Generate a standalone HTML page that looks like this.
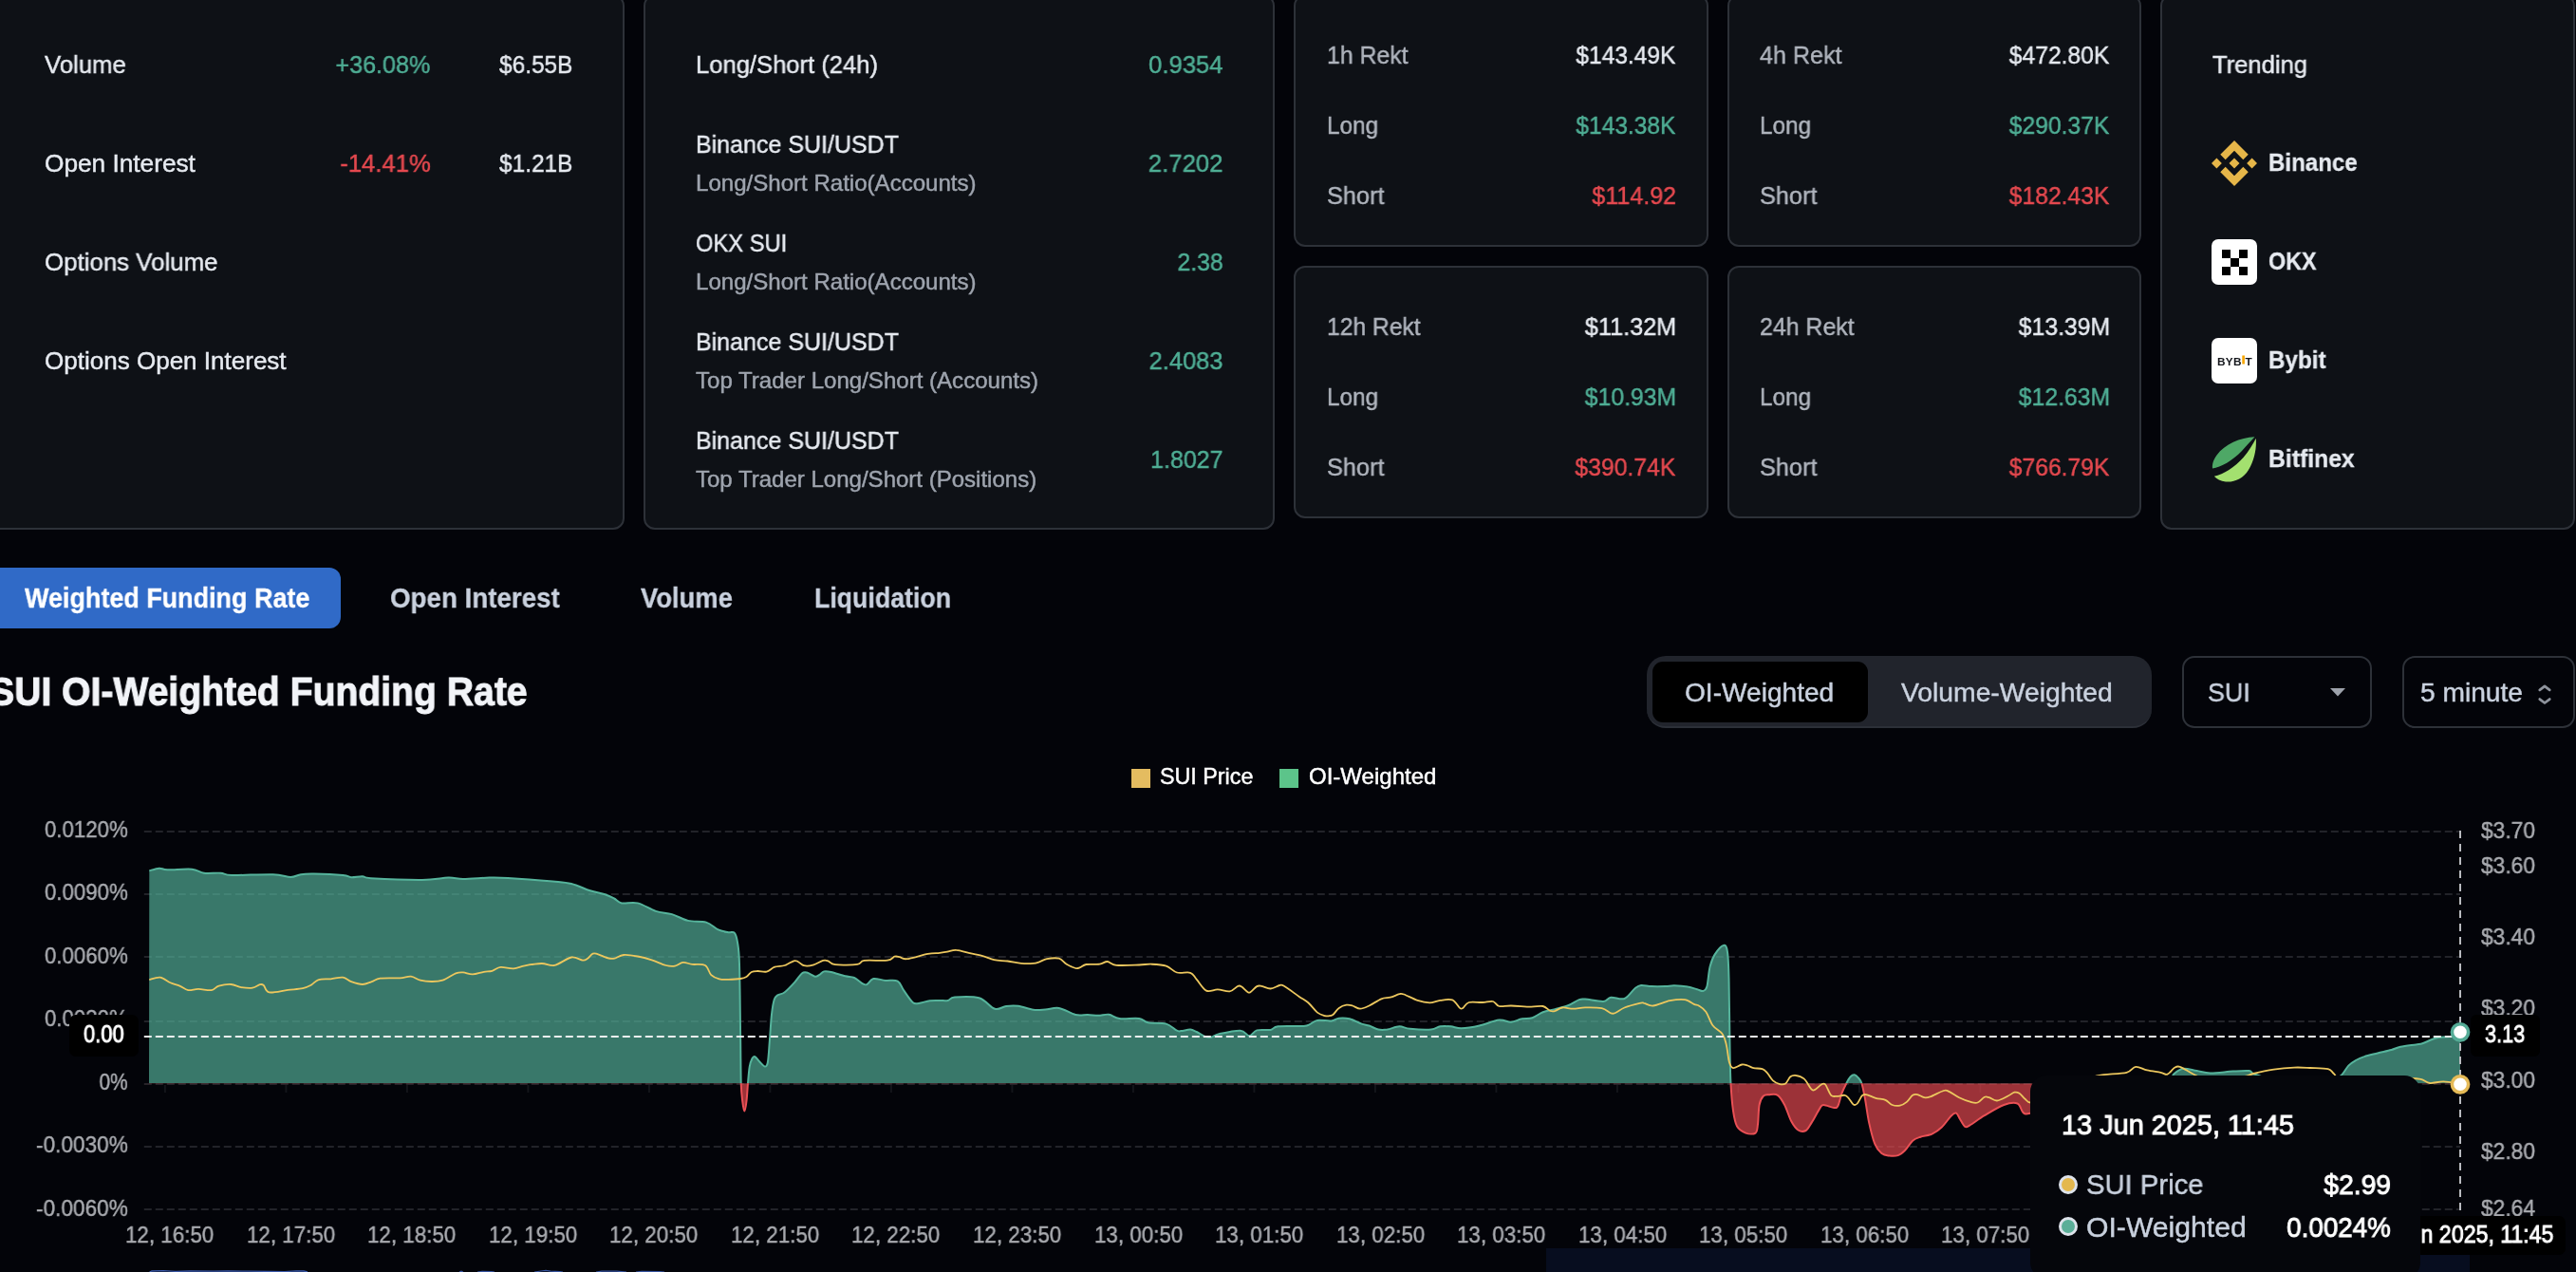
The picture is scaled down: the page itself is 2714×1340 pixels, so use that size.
<!DOCTYPE html><html lang="en"><head><meta charset="utf-8"><title>SUI Derivatives</title><style>
html,body{margin:0;padding:0;background:#030409;}
html{width:2714px;height:1340px;overflow:hidden;}
body{width:2714px;height:1340px;position:relative;overflow:hidden;font-family:"Liberation Sans",sans-serif;}
.abs{position:absolute;}
.t{position:absolute;white-space:nowrap;line-height:1;will-change:transform;-webkit-text-stroke:0.45px;}
.card{position:absolute;box-sizing:border-box;background:#0e1116;border:2px solid #2d3138;border-radius:12px;}
</style></head><body><div id="page" style="position:absolute;left:0;top:0;width:2714px;height:1340px;overflow:hidden">
<div class="card" style="left:-20px;top:-6px;width:678px;height:564px"></div>
<div class="card" style="left:678px;top:-6px;width:665px;height:564px"></div>
<div class="card" style="left:1363px;top:-6px;width:437px;height:266px"></div>
<div class="card" style="left:1820px;top:-6px;width:436px;height:266px"></div>
<div class="card" style="left:1363px;top:280px;width:437px;height:266px"></div>
<div class="card" style="left:1820px;top:280px;width:436px;height:266px"></div>
<div class="card" style="left:2276px;top:-6px;width:437px;height:564px"></div>
<div class="abs" style="left:-20px;top:598px;width:379px;height:64px;background:#306ac7;border-radius:12px"></div>
<div class="abs" style="left:1735px;top:691px;width:532px;height:76px;background:#21242c;border-radius:20px;box-sizing:border-box;border-bottom:2px solid #2c3038"></div>
<div class="abs" style="left:1741px;top:697px;width:227px;height:64px;background:#000;border-radius:11px"></div>
<div class="abs" style="left:2299px;top:691px;width:200px;height:76px;box-sizing:border-box;border:2px solid #2d3138;border-radius:13px"></div>
<div class="abs" style="left:2531px;top:691px;width:182px;height:76px;box-sizing:border-box;border:2px solid #2d3138;border-radius:13px"></div>
<svg class="abs" style="left:2455px;top:725px" width="16" height="9" viewBox="0 0 16 9"><path d="M0,0H16L8,8.6Z" fill="#9da2ab"/></svg>
<svg class="abs" style="left:2672px;top:719px" width="18" height="25" viewBox="0 0 18 25"><path d="M3.8,7.8L9,3.9L14.2,7.8M3.8,17.6L9,21.5L14.2,17.6" fill="none" stroke="#8e939c" stroke-width="2.8" stroke-linecap="round" stroke-linejoin="round"/></svg>
<div class="abs" style="left:1192px;top:810px;width:20px;height:20px;background:#e4bc60"></div>
<div class="abs" style="left:1348px;top:810px;width:20px;height:20px;background:#5cc48a"></div>
<svg class="abs" style="left:2330px;top:148px" width="48" height="48" viewBox="0 0 126.61 126.61"><g fill="#e6b649"><path d="M38.73 53.2l24.59-24.58 24.6 24.6 14.3-14.31L63.32 0 24.42 38.9zM0 63.31l14.3-14.31 14.31 14.31-14.31 14.3zM38.73 73.41l24.59 24.59 24.6-24.6 14.31 14.29-38.9 38.91-38.91-38.88zM98 63.31l14.3-14.31 14.31 14.3-14.31 14.32z"/><path d="M77.83 63.3L63.32 48.78 52.59 59.51l-1.24 1.23-2.54 2.54 14.51 14.5 14.51-14.47z"/></g></svg>
<div class="abs" style="left:2330px;top:252px;width:48px;height:48px;background:#fff;border-radius:7px"></div>
<div class="abs" style="left:2340.5px;top:262.5px;width:9px;height:9px;background:#000"></div>
<div class="abs" style="left:2358.5px;top:262.5px;width:9px;height:9px;background:#000"></div>
<div class="abs" style="left:2349.5px;top:271.5px;width:9px;height:9px;background:#000"></div>
<div class="abs" style="left:2340.5px;top:280.5px;width:9px;height:9px;background:#000"></div>
<div class="abs" style="left:2358.5px;top:280.5px;width:9px;height:9px;background:#000"></div>
<div class="abs" style="left:2330px;top:356px;width:48px;height:48px;background:#fff;border-radius:7px"></div>
<div class="t" id="bybit" style="left:2336px;top:376.2px;font-size:11.8px;font-weight:700;color:#15171c;letter-spacing:0.35px;-webkit-text-stroke:0;transform-origin:0 0">BYB<span style="color:#f7a600;-webkit-text-stroke:0.8px #f7a600;position:relative;top:-2.4px">I</span>T</div>
<svg class="abs" style="left:2330px;top:460px" width="48" height="48" viewBox="0 0 48 48"><path d="M45.5,0.3 C30,1 14,8 5.5,19.5 C1.5,25 0.6,29.5 1,33.5 C10,32 22,25.5 32,15 C38,8.5 42.5,3.5 45.5,0.3Z" fill="#4ea866"/><path d="M46.8,1.8 C47.5,12 45.5,24 39,35 C33.5,44 24,48.3 15,47.5 C9.5,47 5.5,44.5 2.8,41.7 C13,39.5 24,32.5 33.5,22 C39.5,15 44,7.5 46.8,1.8Z" fill="#a3e06f"/></svg>
<svg class="abs" width="2714" height="1340" viewBox="0 0 2714 1340" style="left:0;top:0">
<defs><clipPath id="cpos"><rect x="0" y="800" width="2714" height="341.20000000000005"/></clipPath><clipPath id="cneg"><rect x="0" y="1141.2" width="2714" height="300"/></clipPath></defs>
<rect x="1629" y="1315" width="973" height="30" fill="#070d1f"/>
<path d="M157.5,1340 L160,1339 L172,1338.7 L185,1339.3 L200,1339 L225,1339.2 L240,1338.8 L262,1339.2 L285,1339.4 L300,1339.6 L312,1338.8 L320,1339 L324,1340" fill="none" stroke="#4469c8" stroke-width="1.3" stroke-opacity="0.85"/>
<path d="M484,1340 L486,1339.2 L488,1340 M503,1340 L508,1339.3 L518,1339.5 L521,1340 M563,1340 L570,1339 L575,1338.4 L580,1339.2 L590,1339.6 L593,1340 M628,1340 L634,1339.2 L650,1339.2 L660,1340 M670,1340 L676,1339.4 L695,1339.5 L700,1340" fill="none" stroke="#4469c8" stroke-width="1.2" stroke-opacity="0.8"/>
<line x1="151.8" x2="2592" y1="876.0" y2="876.0" stroke="#222329" stroke-width="2" stroke-dasharray="8 4"/>
<line x1="151.8" x2="2592" y1="942.0" y2="942.0" stroke="#222329" stroke-width="2" stroke-dasharray="8 4"/>
<line x1="151.8" x2="2592" y1="1008.0" y2="1008.0" stroke="#222329" stroke-width="2" stroke-dasharray="8 4"/>
<line x1="151.8" x2="2592" y1="1076.0" y2="1076.0" stroke="#222329" stroke-width="2" stroke-dasharray="8 4"/>
<line x1="151.8" x2="2592" y1="1208.0" y2="1208.0" stroke="#222329" stroke-width="2" stroke-dasharray="8 4"/>
<line x1="151.8" x2="2592" y1="1274.0" y2="1274.0" stroke="#222329" stroke-width="2" stroke-dasharray="8 4"/>
<line x1="151.8" x2="2592" y1="1142" y2="1142" stroke="#272228" stroke-width="2" stroke-dasharray="8 4"/>
<line x1="173.9" x2="173.9" y1="1143" y2="1151" stroke="#13151a" stroke-width="2"/>
<line x1="301.4" x2="301.4" y1="1143" y2="1151" stroke="#13151a" stroke-width="2"/>
<line x1="428.9" x2="428.9" y1="1143" y2="1151" stroke="#13151a" stroke-width="2"/>
<line x1="556.4" x2="556.4" y1="1143" y2="1151" stroke="#13151a" stroke-width="2"/>
<line x1="683.9" x2="683.9" y1="1143" y2="1151" stroke="#13151a" stroke-width="2"/>
<line x1="811.4" x2="811.4" y1="1143" y2="1151" stroke="#13151a" stroke-width="2"/>
<line x1="938.9" x2="938.9" y1="1143" y2="1151" stroke="#13151a" stroke-width="2"/>
<line x1="1066.4" x2="1066.4" y1="1143" y2="1151" stroke="#13151a" stroke-width="2"/>
<line x1="1193.9" x2="1193.9" y1="1143" y2="1151" stroke="#13151a" stroke-width="2"/>
<line x1="1321.4" x2="1321.4" y1="1143" y2="1151" stroke="#13151a" stroke-width="2"/>
<line x1="1448.9" x2="1448.9" y1="1143" y2="1151" stroke="#13151a" stroke-width="2"/>
<line x1="1576.4" x2="1576.4" y1="1143" y2="1151" stroke="#13151a" stroke-width="2"/>
<line x1="1703.9" x2="1703.9" y1="1143" y2="1151" stroke="#13151a" stroke-width="2"/>
<line x1="1831.4" x2="1831.4" y1="1143" y2="1151" stroke="#13151a" stroke-width="2"/>
<line x1="1958.9" x2="1958.9" y1="1143" y2="1151" stroke="#13151a" stroke-width="2"/>
<line x1="2086.4" x2="2086.4" y1="1143" y2="1151" stroke="#13151a" stroke-width="2"/>
<line x1="2213.9" x2="2213.9" y1="1143" y2="1151" stroke="#13151a" stroke-width="2"/>
<line x1="2341.4" x2="2341.4" y1="1143" y2="1151" stroke="#13151a" stroke-width="2"/>
<line x1="2468.9" x2="2468.9" y1="1143" y2="1151" stroke="#13151a" stroke-width="2"/>
<g clip-path="url(#cpos)"><path d="M157.3,917.3C159.0,916.9 164.5,914.9 167.7,914.7C170.9,914.5 170.8,916.1 176.5,916.3C182.2,916.5 195.7,915.1 202.1,915.7C208.5,916.3 209.8,919.0 214.9,919.7C220.0,920.4 227.6,919.3 232.5,919.7C237.4,920.1 235.1,921.8 244.3,922.0C253.5,922.2 277.3,920.9 287.6,921.2C297.9,921.5 301.3,924.0 306.2,924.0C311.1,924.0 312.9,921.8 317.0,921.2C321.1,920.6 323.4,920.5 330.8,920.6C338.2,920.7 354.8,921.4 361.3,922.0C367.9,922.6 366.7,924.0 370.1,924.2C373.5,924.4 378.4,923.0 381.9,923.2C385.3,923.4 381.9,924.6 390.8,925.2C401.3,925.8 431.2,927.0 444.8,926.9C458.4,926.8 465.1,924.8 472.3,924.6C479.5,924.4 480.8,925.9 488.0,925.9C495.2,925.9 507.7,924.8 515.6,924.6C523.5,924.5 524.1,924.4 535.2,925.0C546.3,925.6 571.3,927.5 582.4,928.5C593.5,929.5 595.5,929.4 602.0,931.0C608.5,932.6 615.8,936.4 621.7,938.3C627.6,940.2 633.2,940.9 637.4,942.3C641.6,943.7 644.1,945.0 647.0,946.5C649.9,948.0 650.8,950.6 654.9,951.4C659.0,952.2 665.8,950.0 671.8,951.4C677.8,952.8 684.9,957.9 690.9,959.9C696.9,961.9 702.2,961.4 707.9,963.1C713.6,964.8 718.9,968.5 724.9,969.9C730.9,971.3 738.7,970.0 744.0,971.6C749.3,973.2 752.8,977.6 756.7,979.4C760.6,981.2 764.6,981.7 767.4,982.2C770.2,982.7 772.1,980.9 773.7,982.6C775.3,984.3 776.0,986.7 776.9,992.2C777.8,997.7 778.5,999.2 779.0,1015.5C779.5,1031.8 779.8,1068.9 780.1,1089.8C780.4,1110.7 780.4,1129.1 780.7,1140.8C781.1,1152.5 781.6,1155.0 782.2,1159.9C782.8,1164.9 783.6,1170.5 784.3,1170.5C785.0,1170.5 785.9,1164.9 786.5,1159.9C787.1,1155.0 787.5,1146.8 788.0,1140.8C788.5,1134.8 789.0,1128.0 789.7,1123.8C790.4,1119.5 791.5,1117.1 792.4,1115.3C793.3,1113.5 794.1,1112.7 795.4,1113.2C796.7,1113.7 798.6,1116.8 800.3,1118.5C802.0,1120.2 804.2,1123.2 805.6,1123.4C807.0,1123.6 807.9,1124.0 808.8,1119.5C809.7,1115.0 810.2,1104.7 810.9,1096.2C811.6,1087.7 812.2,1075.8 813.0,1068.6C813.8,1061.3 814.7,1056.1 815.8,1052.7C816.9,1049.3 817.6,1049.7 819.4,1048.4C821.2,1047.2 823.8,1047.5 826.8,1045.2C829.8,1042.9 834.4,1037.9 837.4,1034.6C840.4,1031.3 842.7,1027.2 844.8,1025.5C846.9,1023.8 847.8,1024.1 850.1,1024.6C852.4,1025.1 856.5,1028.3 858.6,1028.7C860.7,1029.1 861.3,1028.1 862.9,1027.2C864.5,1026.3 866.1,1023.9 868.2,1023.4C870.3,1022.9 871.9,1023.2 875.6,1024.0C879.3,1024.8 886.4,1027.3 890.5,1028.3C894.6,1029.3 896.8,1028.6 900.0,1030.0C903.2,1031.4 907.3,1035.6 909.6,1036.7C911.9,1037.8 912.0,1037.7 913.8,1036.7C915.6,1035.8 917.0,1031.6 920.2,1031.0C923.4,1030.4 928.6,1032.5 932.9,1032.9C937.1,1033.3 942.5,1031.9 945.7,1033.6C948.9,1035.3 949.4,1039.4 952.0,1043.1C954.6,1046.8 958.9,1053.6 961.6,1055.9C964.3,1058.2 965.0,1057.2 968.0,1056.9C971.0,1056.6 975.9,1054.7 979.6,1054.2C983.3,1053.7 986.8,1054.0 990.0,1053.9C993.2,1053.9 996.1,1054.5 998.8,1053.9C1001.4,1053.3 1000.5,1050.9 1005.9,1050.4C1011.3,1050.0 1024.4,1049.2 1031.4,1051.2C1038.4,1053.2 1043.3,1061.2 1048.1,1062.7C1052.9,1064.2 1055.9,1060.5 1060.0,1060.0C1064.1,1059.5 1068.0,1059.2 1072.8,1059.8C1077.6,1060.4 1083.9,1063.2 1088.7,1063.8C1093.5,1064.4 1096.9,1063.8 1101.4,1063.5C1105.9,1063.2 1110.4,1061.0 1115.7,1061.9C1121.0,1062.8 1128.2,1067.8 1133.2,1069.0C1138.2,1070.2 1142.0,1068.9 1146.0,1069.0C1150.0,1069.1 1153.4,1069.8 1157.1,1069.8C1160.8,1069.8 1164.6,1068.2 1168.3,1068.7C1172.0,1069.2 1174.1,1072.3 1179.4,1073.0C1184.7,1073.7 1195.1,1072.3 1200.1,1073.0C1205.1,1073.7 1204.8,1076.4 1209.6,1077.3C1214.4,1078.2 1223.7,1077.2 1228.7,1078.6C1233.8,1080.0 1237.2,1084.5 1239.9,1085.7C1242.6,1087.0 1242.3,1086.3 1244.7,1086.1C1247.1,1085.9 1251.6,1084.4 1254.2,1084.6C1256.8,1084.8 1257.9,1085.8 1260.6,1087.0C1263.2,1088.2 1267.4,1091.2 1270.1,1092.1C1272.8,1093.0 1274.1,1092.9 1276.5,1092.4C1278.9,1091.9 1279.4,1090.3 1284.4,1089.2C1289.4,1088.1 1301.4,1085.4 1306.7,1085.7C1312.0,1086.0 1313.4,1091.3 1316.3,1091.3C1319.2,1091.2 1320.5,1086.5 1324.2,1085.4C1327.9,1084.3 1334.9,1085.6 1338.6,1084.9C1342.3,1084.2 1340.7,1082.0 1346.5,1081.3C1352.3,1080.6 1368.0,1081.4 1373.6,1081.0C1379.2,1080.6 1377.5,1080.1 1379.9,1079.1C1382.3,1078.1 1384.1,1075.5 1387.9,1074.9C1391.7,1074.3 1398.9,1075.8 1402.7,1075.4C1406.5,1075.0 1407.5,1073.1 1410.7,1072.7C1413.9,1072.3 1417.8,1072.3 1421.8,1073.3C1425.8,1074.3 1431.1,1077.4 1434.6,1078.6C1438.0,1079.8 1439.6,1079.5 1442.5,1080.5C1445.4,1081.5 1448.9,1083.9 1452.1,1084.6C1455.3,1085.3 1457.9,1085.1 1461.6,1084.6C1465.3,1084.0 1470.4,1081.4 1474.4,1081.3C1478.4,1081.2 1479.9,1083.3 1485.5,1083.8C1491.1,1084.3 1502.5,1084.9 1507.8,1084.5C1513.1,1084.1 1513.8,1081.8 1517.3,1081.3C1520.8,1080.8 1524.8,1081.0 1528.5,1081.3C1532.2,1081.6 1534.6,1083.4 1539.6,1083.3C1544.6,1083.2 1552.1,1082.0 1558.7,1080.5C1565.3,1079.0 1573.8,1075.2 1579.4,1074.6C1585.0,1074.0 1588.1,1076.9 1592.1,1076.7C1596.1,1076.5 1599.6,1074.0 1603.3,1073.3C1607.0,1072.5 1610.7,1073.4 1614.4,1072.2C1618.1,1071.0 1621.6,1067.8 1625.6,1066.3C1629.6,1064.8 1633.8,1064.3 1638.3,1063.1C1642.8,1061.9 1648.3,1060.7 1652.6,1059.0C1656.8,1057.3 1660.9,1054.2 1663.8,1053.1C1666.7,1052.0 1665.9,1052.3 1670.1,1052.6C1674.3,1052.9 1684.7,1055.3 1689.2,1055.0C1693.7,1054.7 1693.5,1051.2 1697.2,1050.7C1700.9,1050.2 1707.3,1053.6 1711.5,1052.0C1715.7,1050.4 1719.7,1043.5 1722.6,1041.2C1725.5,1038.9 1726.1,1038.3 1729.0,1038.0C1731.9,1037.7 1735.8,1038.9 1740.1,1039.1C1744.3,1039.3 1750.5,1039.2 1754.5,1039.1C1758.5,1039.0 1760.0,1038.2 1764.0,1038.3C1768.0,1038.4 1774.3,1038.9 1778.3,1039.6C1782.3,1040.2 1785.3,1041.5 1788.0,1042.2C1790.7,1042.9 1792.6,1044.5 1794.3,1044.0C1796.0,1043.5 1797.2,1043.5 1798.4,1039.3C1799.6,1035.1 1800.1,1024.4 1801.5,1018.8C1802.9,1013.2 1804.2,1009.4 1806.6,1005.6C1809.0,1001.8 1813.6,996.4 1815.8,995.9C1818.0,995.4 1819.0,996.6 1819.9,1002.5C1820.9,1008.4 1821.1,1014.4 1821.5,1031.1C1821.9,1047.8 1822.2,1084.2 1822.5,1102.6C1822.8,1121.0 1822.9,1130.2 1823.5,1141.5C1824.1,1152.8 1824.9,1162.6 1826.0,1170.1C1827.1,1177.6 1827.9,1182.6 1830.1,1186.5C1832.3,1190.4 1836.1,1192.4 1839.3,1193.6C1842.5,1194.8 1847.4,1195.1 1849.5,1193.6C1851.6,1192.1 1851.3,1189.3 1852.0,1184.4C1852.7,1179.5 1852.6,1168.9 1853.6,1164.0C1854.5,1159.1 1856.0,1156.6 1857.7,1154.8C1859.4,1153.0 1861.2,1153.5 1863.8,1153.3C1866.3,1153.1 1870.3,1152.0 1873.0,1153.8C1875.7,1155.6 1877.8,1159.4 1880.2,1164.0C1882.6,1168.6 1884.9,1176.9 1887.3,1181.3C1889.7,1185.7 1892.0,1188.9 1894.5,1190.5C1897.0,1192.1 1900.2,1192.3 1902.6,1191.0C1905.0,1189.7 1906.4,1186.2 1908.8,1182.4C1911.2,1178.6 1915.0,1171.2 1917.0,1168.1C1919.0,1165.0 1918.5,1164.2 1921.0,1164.0C1923.5,1163.8 1929.7,1166.8 1932.3,1167.0C1934.9,1167.2 1935.0,1167.5 1936.4,1165.0C1937.8,1162.5 1939.0,1155.6 1940.5,1151.7C1942.0,1147.8 1943.7,1144.4 1945.2,1141.5C1946.7,1138.6 1948.3,1135.8 1949.7,1134.3C1951.1,1132.8 1952.5,1132.1 1953.8,1132.3C1955.1,1132.5 1956.5,1133.9 1957.8,1135.4C1959.1,1136.9 1960.3,1137.8 1961.5,1141.5C1962.7,1145.2 1963.7,1151.0 1965.0,1157.8C1966.3,1164.6 1967.4,1174.6 1969.1,1182.4C1970.8,1190.2 1973.0,1199.5 1975.2,1204.9C1977.4,1210.4 1979.9,1213.0 1982.4,1215.1C1985.0,1217.2 1987.6,1217.2 1990.5,1217.5C1993.4,1217.8 1997.0,1218.0 1999.7,1217.1C2002.4,1216.2 2004.3,1214.5 2006.9,1212.0C2009.5,1209.5 2012.4,1204.2 2015.1,1201.8C2017.8,1199.4 2019.9,1198.9 2023.3,1197.7C2026.7,1196.5 2031.8,1196.3 2035.5,1194.6C2039.2,1192.9 2042.3,1190.7 2045.7,1187.5C2049.1,1184.3 2053.4,1177.7 2056.0,1175.2C2058.6,1172.7 2059.6,1171.9 2061.1,1172.6C2062.6,1173.3 2063.7,1176.9 2065.2,1179.3C2066.7,1181.7 2068.6,1185.9 2070.3,1186.9C2072.0,1187.9 2072.0,1187.4 2075.4,1185.4C2078.8,1183.5 2084.7,1178.8 2090.7,1175.2C2096.7,1171.6 2105.4,1166.1 2111.2,1164.0C2117.0,1161.9 2122.1,1161.2 2125.5,1162.5C2128.9,1163.8 2129.3,1170.4 2131.6,1172.1C2133.8,1173.8 2134.3,1174.0 2139.0,1172.8C2143.7,1171.6 2149.8,1167.5 2160.0,1165.0C2170.2,1162.5 2185.0,1160.5 2200.0,1158.0C2215.0,1155.5 2236.3,1152.8 2250.0,1150.0C2263.7,1147.2 2275.2,1144.7 2282.0,1141.5C2288.8,1138.3 2287.7,1133.6 2290.7,1131.0C2293.7,1128.4 2296.2,1126.2 2300.2,1125.7C2304.2,1125.2 2309.7,1127.3 2314.5,1128.1C2319.3,1128.9 2322.4,1130.4 2328.8,1130.5C2335.2,1130.6 2345.9,1129.0 2352.7,1128.6C2359.5,1128.2 2365.8,1127.7 2369.4,1128.1C2373.0,1128.5 2370.7,1129.8 2374.1,1131.0C2377.5,1132.2 2380.7,1134.6 2390.0,1135.5C2399.3,1136.4 2418.7,1136.4 2430.0,1136.5C2441.3,1136.6 2451.9,1136.6 2458.0,1136.0C2464.1,1135.4 2463.7,1135.3 2466.4,1133.1C2469.1,1130.9 2471.7,1125.3 2474.3,1122.6C2476.9,1119.9 2479.2,1118.6 2482.0,1117.0C2484.8,1115.4 2487.1,1114.3 2490.9,1113.1C2494.7,1111.8 2500.2,1110.7 2505.0,1109.5C2509.8,1108.3 2515.5,1107.1 2519.5,1106.0C2523.5,1104.9 2524.8,1103.7 2529.1,1102.8C2533.4,1101.9 2541.4,1101.0 2545.4,1100.4C2549.4,1099.8 2549.4,1100.2 2552.9,1099.0C2556.4,1097.8 2561.8,1094.7 2566.6,1093.5C2571.4,1092.3 2577.8,1092.9 2582.0,1091.9C2586.2,1090.9 2590.3,1088.4 2592.0,1087.7L2592,1141.2L157,1141.2Z" fill="#55b59c" fill-opacity="0.66"/><path d="M157.3,917.3C159.0,916.9 164.5,914.9 167.7,914.7C170.9,914.5 170.8,916.1 176.5,916.3C182.2,916.5 195.7,915.1 202.1,915.7C208.5,916.3 209.8,919.0 214.9,919.7C220.0,920.4 227.6,919.3 232.5,919.7C237.4,920.1 235.1,921.8 244.3,922.0C253.5,922.2 277.3,920.9 287.6,921.2C297.9,921.5 301.3,924.0 306.2,924.0C311.1,924.0 312.9,921.8 317.0,921.2C321.1,920.6 323.4,920.5 330.8,920.6C338.2,920.7 354.8,921.4 361.3,922.0C367.9,922.6 366.7,924.0 370.1,924.2C373.5,924.4 378.4,923.0 381.9,923.2C385.3,923.4 381.9,924.6 390.8,925.2C401.3,925.8 431.2,927.0 444.8,926.9C458.4,926.8 465.1,924.8 472.3,924.6C479.5,924.4 480.8,925.9 488.0,925.9C495.2,925.9 507.7,924.8 515.6,924.6C523.5,924.5 524.1,924.4 535.2,925.0C546.3,925.6 571.3,927.5 582.4,928.5C593.5,929.5 595.5,929.4 602.0,931.0C608.5,932.6 615.8,936.4 621.7,938.3C627.6,940.2 633.2,940.9 637.4,942.3C641.6,943.7 644.1,945.0 647.0,946.5C649.9,948.0 650.8,950.6 654.9,951.4C659.0,952.2 665.8,950.0 671.8,951.4C677.8,952.8 684.9,957.9 690.9,959.9C696.9,961.9 702.2,961.4 707.9,963.1C713.6,964.8 718.9,968.5 724.9,969.9C730.9,971.3 738.7,970.0 744.0,971.6C749.3,973.2 752.8,977.6 756.7,979.4C760.6,981.2 764.6,981.7 767.4,982.2C770.2,982.7 772.1,980.9 773.7,982.6C775.3,984.3 776.0,986.7 776.9,992.2C777.8,997.7 778.5,999.2 779.0,1015.5C779.5,1031.8 779.8,1068.9 780.1,1089.8C780.4,1110.7 780.4,1129.1 780.7,1140.8C781.1,1152.5 781.6,1155.0 782.2,1159.9C782.8,1164.9 783.6,1170.5 784.3,1170.5C785.0,1170.5 785.9,1164.9 786.5,1159.9C787.1,1155.0 787.5,1146.8 788.0,1140.8C788.5,1134.8 789.0,1128.0 789.7,1123.8C790.4,1119.5 791.5,1117.1 792.4,1115.3C793.3,1113.5 794.1,1112.7 795.4,1113.2C796.7,1113.7 798.6,1116.8 800.3,1118.5C802.0,1120.2 804.2,1123.2 805.6,1123.4C807.0,1123.6 807.9,1124.0 808.8,1119.5C809.7,1115.0 810.2,1104.7 810.9,1096.2C811.6,1087.7 812.2,1075.8 813.0,1068.6C813.8,1061.3 814.7,1056.1 815.8,1052.7C816.9,1049.3 817.6,1049.7 819.4,1048.4C821.2,1047.2 823.8,1047.5 826.8,1045.2C829.8,1042.9 834.4,1037.9 837.4,1034.6C840.4,1031.3 842.7,1027.2 844.8,1025.5C846.9,1023.8 847.8,1024.1 850.1,1024.6C852.4,1025.1 856.5,1028.3 858.6,1028.7C860.7,1029.1 861.3,1028.1 862.9,1027.2C864.5,1026.3 866.1,1023.9 868.2,1023.4C870.3,1022.9 871.9,1023.2 875.6,1024.0C879.3,1024.8 886.4,1027.3 890.5,1028.3C894.6,1029.3 896.8,1028.6 900.0,1030.0C903.2,1031.4 907.3,1035.6 909.6,1036.7C911.9,1037.8 912.0,1037.7 913.8,1036.7C915.6,1035.8 917.0,1031.6 920.2,1031.0C923.4,1030.4 928.6,1032.5 932.9,1032.9C937.1,1033.3 942.5,1031.9 945.7,1033.6C948.9,1035.3 949.4,1039.4 952.0,1043.1C954.6,1046.8 958.9,1053.6 961.6,1055.9C964.3,1058.2 965.0,1057.2 968.0,1056.9C971.0,1056.6 975.9,1054.7 979.6,1054.2C983.3,1053.7 986.8,1054.0 990.0,1053.9C993.2,1053.9 996.1,1054.5 998.8,1053.9C1001.4,1053.3 1000.5,1050.9 1005.9,1050.4C1011.3,1050.0 1024.4,1049.2 1031.4,1051.2C1038.4,1053.2 1043.3,1061.2 1048.1,1062.7C1052.9,1064.2 1055.9,1060.5 1060.0,1060.0C1064.1,1059.5 1068.0,1059.2 1072.8,1059.8C1077.6,1060.4 1083.9,1063.2 1088.7,1063.8C1093.5,1064.4 1096.9,1063.8 1101.4,1063.5C1105.9,1063.2 1110.4,1061.0 1115.7,1061.9C1121.0,1062.8 1128.2,1067.8 1133.2,1069.0C1138.2,1070.2 1142.0,1068.9 1146.0,1069.0C1150.0,1069.1 1153.4,1069.8 1157.1,1069.8C1160.8,1069.8 1164.6,1068.2 1168.3,1068.7C1172.0,1069.2 1174.1,1072.3 1179.4,1073.0C1184.7,1073.7 1195.1,1072.3 1200.1,1073.0C1205.1,1073.7 1204.8,1076.4 1209.6,1077.3C1214.4,1078.2 1223.7,1077.2 1228.7,1078.6C1233.8,1080.0 1237.2,1084.5 1239.9,1085.7C1242.6,1087.0 1242.3,1086.3 1244.7,1086.1C1247.1,1085.9 1251.6,1084.4 1254.2,1084.6C1256.8,1084.8 1257.9,1085.8 1260.6,1087.0C1263.2,1088.2 1267.4,1091.2 1270.1,1092.1C1272.8,1093.0 1274.1,1092.9 1276.5,1092.4C1278.9,1091.9 1279.4,1090.3 1284.4,1089.2C1289.4,1088.1 1301.4,1085.4 1306.7,1085.7C1312.0,1086.0 1313.4,1091.3 1316.3,1091.3C1319.2,1091.2 1320.5,1086.5 1324.2,1085.4C1327.9,1084.3 1334.9,1085.6 1338.6,1084.9C1342.3,1084.2 1340.7,1082.0 1346.5,1081.3C1352.3,1080.6 1368.0,1081.4 1373.6,1081.0C1379.2,1080.6 1377.5,1080.1 1379.9,1079.1C1382.3,1078.1 1384.1,1075.5 1387.9,1074.9C1391.7,1074.3 1398.9,1075.8 1402.7,1075.4C1406.5,1075.0 1407.5,1073.1 1410.7,1072.7C1413.9,1072.3 1417.8,1072.3 1421.8,1073.3C1425.8,1074.3 1431.1,1077.4 1434.6,1078.6C1438.0,1079.8 1439.6,1079.5 1442.5,1080.5C1445.4,1081.5 1448.9,1083.9 1452.1,1084.6C1455.3,1085.3 1457.9,1085.1 1461.6,1084.6C1465.3,1084.0 1470.4,1081.4 1474.4,1081.3C1478.4,1081.2 1479.9,1083.3 1485.5,1083.8C1491.1,1084.3 1502.5,1084.9 1507.8,1084.5C1513.1,1084.1 1513.8,1081.8 1517.3,1081.3C1520.8,1080.8 1524.8,1081.0 1528.5,1081.3C1532.2,1081.6 1534.6,1083.4 1539.6,1083.3C1544.6,1083.2 1552.1,1082.0 1558.7,1080.5C1565.3,1079.0 1573.8,1075.2 1579.4,1074.6C1585.0,1074.0 1588.1,1076.9 1592.1,1076.7C1596.1,1076.5 1599.6,1074.0 1603.3,1073.3C1607.0,1072.5 1610.7,1073.4 1614.4,1072.2C1618.1,1071.0 1621.6,1067.8 1625.6,1066.3C1629.6,1064.8 1633.8,1064.3 1638.3,1063.1C1642.8,1061.9 1648.3,1060.7 1652.6,1059.0C1656.8,1057.3 1660.9,1054.2 1663.8,1053.1C1666.7,1052.0 1665.9,1052.3 1670.1,1052.6C1674.3,1052.9 1684.7,1055.3 1689.2,1055.0C1693.7,1054.7 1693.5,1051.2 1697.2,1050.7C1700.9,1050.2 1707.3,1053.6 1711.5,1052.0C1715.7,1050.4 1719.7,1043.5 1722.6,1041.2C1725.5,1038.9 1726.1,1038.3 1729.0,1038.0C1731.9,1037.7 1735.8,1038.9 1740.1,1039.1C1744.3,1039.3 1750.5,1039.2 1754.5,1039.1C1758.5,1039.0 1760.0,1038.2 1764.0,1038.3C1768.0,1038.4 1774.3,1038.9 1778.3,1039.6C1782.3,1040.2 1785.3,1041.5 1788.0,1042.2C1790.7,1042.9 1792.6,1044.5 1794.3,1044.0C1796.0,1043.5 1797.2,1043.5 1798.4,1039.3C1799.6,1035.1 1800.1,1024.4 1801.5,1018.8C1802.9,1013.2 1804.2,1009.4 1806.6,1005.6C1809.0,1001.8 1813.6,996.4 1815.8,995.9C1818.0,995.4 1819.0,996.6 1819.9,1002.5C1820.9,1008.4 1821.1,1014.4 1821.5,1031.1C1821.9,1047.8 1822.2,1084.2 1822.5,1102.6C1822.8,1121.0 1822.9,1130.2 1823.5,1141.5C1824.1,1152.8 1824.9,1162.6 1826.0,1170.1C1827.1,1177.6 1827.9,1182.6 1830.1,1186.5C1832.3,1190.4 1836.1,1192.4 1839.3,1193.6C1842.5,1194.8 1847.4,1195.1 1849.5,1193.6C1851.6,1192.1 1851.3,1189.3 1852.0,1184.4C1852.7,1179.5 1852.6,1168.9 1853.6,1164.0C1854.5,1159.1 1856.0,1156.6 1857.7,1154.8C1859.4,1153.0 1861.2,1153.5 1863.8,1153.3C1866.3,1153.1 1870.3,1152.0 1873.0,1153.8C1875.7,1155.6 1877.8,1159.4 1880.2,1164.0C1882.6,1168.6 1884.9,1176.9 1887.3,1181.3C1889.7,1185.7 1892.0,1188.9 1894.5,1190.5C1897.0,1192.1 1900.2,1192.3 1902.6,1191.0C1905.0,1189.7 1906.4,1186.2 1908.8,1182.4C1911.2,1178.6 1915.0,1171.2 1917.0,1168.1C1919.0,1165.0 1918.5,1164.2 1921.0,1164.0C1923.5,1163.8 1929.7,1166.8 1932.3,1167.0C1934.9,1167.2 1935.0,1167.5 1936.4,1165.0C1937.8,1162.5 1939.0,1155.6 1940.5,1151.7C1942.0,1147.8 1943.7,1144.4 1945.2,1141.5C1946.7,1138.6 1948.3,1135.8 1949.7,1134.3C1951.1,1132.8 1952.5,1132.1 1953.8,1132.3C1955.1,1132.5 1956.5,1133.9 1957.8,1135.4C1959.1,1136.9 1960.3,1137.8 1961.5,1141.5C1962.7,1145.2 1963.7,1151.0 1965.0,1157.8C1966.3,1164.6 1967.4,1174.6 1969.1,1182.4C1970.8,1190.2 1973.0,1199.5 1975.2,1204.9C1977.4,1210.4 1979.9,1213.0 1982.4,1215.1C1985.0,1217.2 1987.6,1217.2 1990.5,1217.5C1993.4,1217.8 1997.0,1218.0 1999.7,1217.1C2002.4,1216.2 2004.3,1214.5 2006.9,1212.0C2009.5,1209.5 2012.4,1204.2 2015.1,1201.8C2017.8,1199.4 2019.9,1198.9 2023.3,1197.7C2026.7,1196.5 2031.8,1196.3 2035.5,1194.6C2039.2,1192.9 2042.3,1190.7 2045.7,1187.5C2049.1,1184.3 2053.4,1177.7 2056.0,1175.2C2058.6,1172.7 2059.6,1171.9 2061.1,1172.6C2062.6,1173.3 2063.7,1176.9 2065.2,1179.3C2066.7,1181.7 2068.6,1185.9 2070.3,1186.9C2072.0,1187.9 2072.0,1187.4 2075.4,1185.4C2078.8,1183.5 2084.7,1178.8 2090.7,1175.2C2096.7,1171.6 2105.4,1166.1 2111.2,1164.0C2117.0,1161.9 2122.1,1161.2 2125.5,1162.5C2128.9,1163.8 2129.3,1170.4 2131.6,1172.1C2133.8,1173.8 2134.3,1174.0 2139.0,1172.8C2143.7,1171.6 2149.8,1167.5 2160.0,1165.0C2170.2,1162.5 2185.0,1160.5 2200.0,1158.0C2215.0,1155.5 2236.3,1152.8 2250.0,1150.0C2263.7,1147.2 2275.2,1144.7 2282.0,1141.5C2288.8,1138.3 2287.7,1133.6 2290.7,1131.0C2293.7,1128.4 2296.2,1126.2 2300.2,1125.7C2304.2,1125.2 2309.7,1127.3 2314.5,1128.1C2319.3,1128.9 2322.4,1130.4 2328.8,1130.5C2335.2,1130.6 2345.9,1129.0 2352.7,1128.6C2359.5,1128.2 2365.8,1127.7 2369.4,1128.1C2373.0,1128.5 2370.7,1129.8 2374.1,1131.0C2377.5,1132.2 2380.7,1134.6 2390.0,1135.5C2399.3,1136.4 2418.7,1136.4 2430.0,1136.5C2441.3,1136.6 2451.9,1136.6 2458.0,1136.0C2464.1,1135.4 2463.7,1135.3 2466.4,1133.1C2469.1,1130.9 2471.7,1125.3 2474.3,1122.6C2476.9,1119.9 2479.2,1118.6 2482.0,1117.0C2484.8,1115.4 2487.1,1114.3 2490.9,1113.1C2494.7,1111.8 2500.2,1110.7 2505.0,1109.5C2509.8,1108.3 2515.5,1107.1 2519.5,1106.0C2523.5,1104.9 2524.8,1103.7 2529.1,1102.8C2533.4,1101.9 2541.4,1101.0 2545.4,1100.4C2549.4,1099.8 2549.4,1100.2 2552.9,1099.0C2556.4,1097.8 2561.8,1094.7 2566.6,1093.5C2571.4,1092.3 2577.8,1092.9 2582.0,1091.9C2586.2,1090.9 2590.3,1088.4 2592.0,1087.7" fill="none" stroke="#56b49c" stroke-width="2"/></g>
<g clip-path="url(#cneg)"><path d="M157.3,917.3C159.0,916.9 164.5,914.9 167.7,914.7C170.9,914.5 170.8,916.1 176.5,916.3C182.2,916.5 195.7,915.1 202.1,915.7C208.5,916.3 209.8,919.0 214.9,919.7C220.0,920.4 227.6,919.3 232.5,919.7C237.4,920.1 235.1,921.8 244.3,922.0C253.5,922.2 277.3,920.9 287.6,921.2C297.9,921.5 301.3,924.0 306.2,924.0C311.1,924.0 312.9,921.8 317.0,921.2C321.1,920.6 323.4,920.5 330.8,920.6C338.2,920.7 354.8,921.4 361.3,922.0C367.9,922.6 366.7,924.0 370.1,924.2C373.5,924.4 378.4,923.0 381.9,923.2C385.3,923.4 381.9,924.6 390.8,925.2C401.3,925.8 431.2,927.0 444.8,926.9C458.4,926.8 465.1,924.8 472.3,924.6C479.5,924.4 480.8,925.9 488.0,925.9C495.2,925.9 507.7,924.8 515.6,924.6C523.5,924.5 524.1,924.4 535.2,925.0C546.3,925.6 571.3,927.5 582.4,928.5C593.5,929.5 595.5,929.4 602.0,931.0C608.5,932.6 615.8,936.4 621.7,938.3C627.6,940.2 633.2,940.9 637.4,942.3C641.6,943.7 644.1,945.0 647.0,946.5C649.9,948.0 650.8,950.6 654.9,951.4C659.0,952.2 665.8,950.0 671.8,951.4C677.8,952.8 684.9,957.9 690.9,959.9C696.9,961.9 702.2,961.4 707.9,963.1C713.6,964.8 718.9,968.5 724.9,969.9C730.9,971.3 738.7,970.0 744.0,971.6C749.3,973.2 752.8,977.6 756.7,979.4C760.6,981.2 764.6,981.7 767.4,982.2C770.2,982.7 772.1,980.9 773.7,982.6C775.3,984.3 776.0,986.7 776.9,992.2C777.8,997.7 778.5,999.2 779.0,1015.5C779.5,1031.8 779.8,1068.9 780.1,1089.8C780.4,1110.7 780.4,1129.1 780.7,1140.8C781.1,1152.5 781.6,1155.0 782.2,1159.9C782.8,1164.9 783.6,1170.5 784.3,1170.5C785.0,1170.5 785.9,1164.9 786.5,1159.9C787.1,1155.0 787.5,1146.8 788.0,1140.8C788.5,1134.8 789.0,1128.0 789.7,1123.8C790.4,1119.5 791.5,1117.1 792.4,1115.3C793.3,1113.5 794.1,1112.7 795.4,1113.2C796.7,1113.7 798.6,1116.8 800.3,1118.5C802.0,1120.2 804.2,1123.2 805.6,1123.4C807.0,1123.6 807.9,1124.0 808.8,1119.5C809.7,1115.0 810.2,1104.7 810.9,1096.2C811.6,1087.7 812.2,1075.8 813.0,1068.6C813.8,1061.3 814.7,1056.1 815.8,1052.7C816.9,1049.3 817.6,1049.7 819.4,1048.4C821.2,1047.2 823.8,1047.5 826.8,1045.2C829.8,1042.9 834.4,1037.9 837.4,1034.6C840.4,1031.3 842.7,1027.2 844.8,1025.5C846.9,1023.8 847.8,1024.1 850.1,1024.6C852.4,1025.1 856.5,1028.3 858.6,1028.7C860.7,1029.1 861.3,1028.1 862.9,1027.2C864.5,1026.3 866.1,1023.9 868.2,1023.4C870.3,1022.9 871.9,1023.2 875.6,1024.0C879.3,1024.8 886.4,1027.3 890.5,1028.3C894.6,1029.3 896.8,1028.6 900.0,1030.0C903.2,1031.4 907.3,1035.6 909.6,1036.7C911.9,1037.8 912.0,1037.7 913.8,1036.7C915.6,1035.8 917.0,1031.6 920.2,1031.0C923.4,1030.4 928.6,1032.5 932.9,1032.9C937.1,1033.3 942.5,1031.9 945.7,1033.6C948.9,1035.3 949.4,1039.4 952.0,1043.1C954.6,1046.8 958.9,1053.6 961.6,1055.9C964.3,1058.2 965.0,1057.2 968.0,1056.9C971.0,1056.6 975.9,1054.7 979.6,1054.2C983.3,1053.7 986.8,1054.0 990.0,1053.9C993.2,1053.9 996.1,1054.5 998.8,1053.9C1001.4,1053.3 1000.5,1050.9 1005.9,1050.4C1011.3,1050.0 1024.4,1049.2 1031.4,1051.2C1038.4,1053.2 1043.3,1061.2 1048.1,1062.7C1052.9,1064.2 1055.9,1060.5 1060.0,1060.0C1064.1,1059.5 1068.0,1059.2 1072.8,1059.8C1077.6,1060.4 1083.9,1063.2 1088.7,1063.8C1093.5,1064.4 1096.9,1063.8 1101.4,1063.5C1105.9,1063.2 1110.4,1061.0 1115.7,1061.9C1121.0,1062.8 1128.2,1067.8 1133.2,1069.0C1138.2,1070.2 1142.0,1068.9 1146.0,1069.0C1150.0,1069.1 1153.4,1069.8 1157.1,1069.8C1160.8,1069.8 1164.6,1068.2 1168.3,1068.7C1172.0,1069.2 1174.1,1072.3 1179.4,1073.0C1184.7,1073.7 1195.1,1072.3 1200.1,1073.0C1205.1,1073.7 1204.8,1076.4 1209.6,1077.3C1214.4,1078.2 1223.7,1077.2 1228.7,1078.6C1233.8,1080.0 1237.2,1084.5 1239.9,1085.7C1242.6,1087.0 1242.3,1086.3 1244.7,1086.1C1247.1,1085.9 1251.6,1084.4 1254.2,1084.6C1256.8,1084.8 1257.9,1085.8 1260.6,1087.0C1263.2,1088.2 1267.4,1091.2 1270.1,1092.1C1272.8,1093.0 1274.1,1092.9 1276.5,1092.4C1278.9,1091.9 1279.4,1090.3 1284.4,1089.2C1289.4,1088.1 1301.4,1085.4 1306.7,1085.7C1312.0,1086.0 1313.4,1091.3 1316.3,1091.3C1319.2,1091.2 1320.5,1086.5 1324.2,1085.4C1327.9,1084.3 1334.9,1085.6 1338.6,1084.9C1342.3,1084.2 1340.7,1082.0 1346.5,1081.3C1352.3,1080.6 1368.0,1081.4 1373.6,1081.0C1379.2,1080.6 1377.5,1080.1 1379.9,1079.1C1382.3,1078.1 1384.1,1075.5 1387.9,1074.9C1391.7,1074.3 1398.9,1075.8 1402.7,1075.4C1406.5,1075.0 1407.5,1073.1 1410.7,1072.7C1413.9,1072.3 1417.8,1072.3 1421.8,1073.3C1425.8,1074.3 1431.1,1077.4 1434.6,1078.6C1438.0,1079.8 1439.6,1079.5 1442.5,1080.5C1445.4,1081.5 1448.9,1083.9 1452.1,1084.6C1455.3,1085.3 1457.9,1085.1 1461.6,1084.6C1465.3,1084.0 1470.4,1081.4 1474.4,1081.3C1478.4,1081.2 1479.9,1083.3 1485.5,1083.8C1491.1,1084.3 1502.5,1084.9 1507.8,1084.5C1513.1,1084.1 1513.8,1081.8 1517.3,1081.3C1520.8,1080.8 1524.8,1081.0 1528.5,1081.3C1532.2,1081.6 1534.6,1083.4 1539.6,1083.3C1544.6,1083.2 1552.1,1082.0 1558.7,1080.5C1565.3,1079.0 1573.8,1075.2 1579.4,1074.6C1585.0,1074.0 1588.1,1076.9 1592.1,1076.7C1596.1,1076.5 1599.6,1074.0 1603.3,1073.3C1607.0,1072.5 1610.7,1073.4 1614.4,1072.2C1618.1,1071.0 1621.6,1067.8 1625.6,1066.3C1629.6,1064.8 1633.8,1064.3 1638.3,1063.1C1642.8,1061.9 1648.3,1060.7 1652.6,1059.0C1656.8,1057.3 1660.9,1054.2 1663.8,1053.1C1666.7,1052.0 1665.9,1052.3 1670.1,1052.6C1674.3,1052.9 1684.7,1055.3 1689.2,1055.0C1693.7,1054.7 1693.5,1051.2 1697.2,1050.7C1700.9,1050.2 1707.3,1053.6 1711.5,1052.0C1715.7,1050.4 1719.7,1043.5 1722.6,1041.2C1725.5,1038.9 1726.1,1038.3 1729.0,1038.0C1731.9,1037.7 1735.8,1038.9 1740.1,1039.1C1744.3,1039.3 1750.5,1039.2 1754.5,1039.1C1758.5,1039.0 1760.0,1038.2 1764.0,1038.3C1768.0,1038.4 1774.3,1038.9 1778.3,1039.6C1782.3,1040.2 1785.3,1041.5 1788.0,1042.2C1790.7,1042.9 1792.6,1044.5 1794.3,1044.0C1796.0,1043.5 1797.2,1043.5 1798.4,1039.3C1799.6,1035.1 1800.1,1024.4 1801.5,1018.8C1802.9,1013.2 1804.2,1009.4 1806.6,1005.6C1809.0,1001.8 1813.6,996.4 1815.8,995.9C1818.0,995.4 1819.0,996.6 1819.9,1002.5C1820.9,1008.4 1821.1,1014.4 1821.5,1031.1C1821.9,1047.8 1822.2,1084.2 1822.5,1102.6C1822.8,1121.0 1822.9,1130.2 1823.5,1141.5C1824.1,1152.8 1824.9,1162.6 1826.0,1170.1C1827.1,1177.6 1827.9,1182.6 1830.1,1186.5C1832.3,1190.4 1836.1,1192.4 1839.3,1193.6C1842.5,1194.8 1847.4,1195.1 1849.5,1193.6C1851.6,1192.1 1851.3,1189.3 1852.0,1184.4C1852.7,1179.5 1852.6,1168.9 1853.6,1164.0C1854.5,1159.1 1856.0,1156.6 1857.7,1154.8C1859.4,1153.0 1861.2,1153.5 1863.8,1153.3C1866.3,1153.1 1870.3,1152.0 1873.0,1153.8C1875.7,1155.6 1877.8,1159.4 1880.2,1164.0C1882.6,1168.6 1884.9,1176.9 1887.3,1181.3C1889.7,1185.7 1892.0,1188.9 1894.5,1190.5C1897.0,1192.1 1900.2,1192.3 1902.6,1191.0C1905.0,1189.7 1906.4,1186.2 1908.8,1182.4C1911.2,1178.6 1915.0,1171.2 1917.0,1168.1C1919.0,1165.0 1918.5,1164.2 1921.0,1164.0C1923.5,1163.8 1929.7,1166.8 1932.3,1167.0C1934.9,1167.2 1935.0,1167.5 1936.4,1165.0C1937.8,1162.5 1939.0,1155.6 1940.5,1151.7C1942.0,1147.8 1943.7,1144.4 1945.2,1141.5C1946.7,1138.6 1948.3,1135.8 1949.7,1134.3C1951.1,1132.8 1952.5,1132.1 1953.8,1132.3C1955.1,1132.5 1956.5,1133.9 1957.8,1135.4C1959.1,1136.9 1960.3,1137.8 1961.5,1141.5C1962.7,1145.2 1963.7,1151.0 1965.0,1157.8C1966.3,1164.6 1967.4,1174.6 1969.1,1182.4C1970.8,1190.2 1973.0,1199.5 1975.2,1204.9C1977.4,1210.4 1979.9,1213.0 1982.4,1215.1C1985.0,1217.2 1987.6,1217.2 1990.5,1217.5C1993.4,1217.8 1997.0,1218.0 1999.7,1217.1C2002.4,1216.2 2004.3,1214.5 2006.9,1212.0C2009.5,1209.5 2012.4,1204.2 2015.1,1201.8C2017.8,1199.4 2019.9,1198.9 2023.3,1197.7C2026.7,1196.5 2031.8,1196.3 2035.5,1194.6C2039.2,1192.9 2042.3,1190.7 2045.7,1187.5C2049.1,1184.3 2053.4,1177.7 2056.0,1175.2C2058.6,1172.7 2059.6,1171.9 2061.1,1172.6C2062.6,1173.3 2063.7,1176.9 2065.2,1179.3C2066.7,1181.7 2068.6,1185.9 2070.3,1186.9C2072.0,1187.9 2072.0,1187.4 2075.4,1185.4C2078.8,1183.5 2084.7,1178.8 2090.7,1175.2C2096.7,1171.6 2105.4,1166.1 2111.2,1164.0C2117.0,1161.9 2122.1,1161.2 2125.5,1162.5C2128.9,1163.8 2129.3,1170.4 2131.6,1172.1C2133.8,1173.8 2134.3,1174.0 2139.0,1172.8C2143.7,1171.6 2149.8,1167.5 2160.0,1165.0C2170.2,1162.5 2185.0,1160.5 2200.0,1158.0C2215.0,1155.5 2236.3,1152.8 2250.0,1150.0C2263.7,1147.2 2275.2,1144.7 2282.0,1141.5C2288.8,1138.3 2287.7,1133.6 2290.7,1131.0C2293.7,1128.4 2296.2,1126.2 2300.2,1125.7C2304.2,1125.2 2309.7,1127.3 2314.5,1128.1C2319.3,1128.9 2322.4,1130.4 2328.8,1130.5C2335.2,1130.6 2345.9,1129.0 2352.7,1128.6C2359.5,1128.2 2365.8,1127.7 2369.4,1128.1C2373.0,1128.5 2370.7,1129.8 2374.1,1131.0C2377.5,1132.2 2380.7,1134.6 2390.0,1135.5C2399.3,1136.4 2418.7,1136.4 2430.0,1136.5C2441.3,1136.6 2451.9,1136.6 2458.0,1136.0C2464.1,1135.4 2463.7,1135.3 2466.4,1133.1C2469.1,1130.9 2471.7,1125.3 2474.3,1122.6C2476.9,1119.9 2479.2,1118.6 2482.0,1117.0C2484.8,1115.4 2487.1,1114.3 2490.9,1113.1C2494.7,1111.8 2500.2,1110.7 2505.0,1109.5C2509.8,1108.3 2515.5,1107.1 2519.5,1106.0C2523.5,1104.9 2524.8,1103.7 2529.1,1102.8C2533.4,1101.9 2541.4,1101.0 2545.4,1100.4C2549.4,1099.8 2549.4,1100.2 2552.9,1099.0C2556.4,1097.8 2561.8,1094.7 2566.6,1093.5C2571.4,1092.3 2577.8,1092.9 2582.0,1091.9C2586.2,1090.9 2590.3,1088.4 2592.0,1087.7L2592,1141.2L157,1141.2Z" fill="#ec4a50" fill-opacity="0.66"/><path d="M157.3,917.3C159.0,916.9 164.5,914.9 167.7,914.7C170.9,914.5 170.8,916.1 176.5,916.3C182.2,916.5 195.7,915.1 202.1,915.7C208.5,916.3 209.8,919.0 214.9,919.7C220.0,920.4 227.6,919.3 232.5,919.7C237.4,920.1 235.1,921.8 244.3,922.0C253.5,922.2 277.3,920.9 287.6,921.2C297.9,921.5 301.3,924.0 306.2,924.0C311.1,924.0 312.9,921.8 317.0,921.2C321.1,920.6 323.4,920.5 330.8,920.6C338.2,920.7 354.8,921.4 361.3,922.0C367.9,922.6 366.7,924.0 370.1,924.2C373.5,924.4 378.4,923.0 381.9,923.2C385.3,923.4 381.9,924.6 390.8,925.2C401.3,925.8 431.2,927.0 444.8,926.9C458.4,926.8 465.1,924.8 472.3,924.6C479.5,924.4 480.8,925.9 488.0,925.9C495.2,925.9 507.7,924.8 515.6,924.6C523.5,924.5 524.1,924.4 535.2,925.0C546.3,925.6 571.3,927.5 582.4,928.5C593.5,929.5 595.5,929.4 602.0,931.0C608.5,932.6 615.8,936.4 621.7,938.3C627.6,940.2 633.2,940.9 637.4,942.3C641.6,943.7 644.1,945.0 647.0,946.5C649.9,948.0 650.8,950.6 654.9,951.4C659.0,952.2 665.8,950.0 671.8,951.4C677.8,952.8 684.9,957.9 690.9,959.9C696.9,961.9 702.2,961.4 707.9,963.1C713.6,964.8 718.9,968.5 724.9,969.9C730.9,971.3 738.7,970.0 744.0,971.6C749.3,973.2 752.8,977.6 756.7,979.4C760.6,981.2 764.6,981.7 767.4,982.2C770.2,982.7 772.1,980.9 773.7,982.6C775.3,984.3 776.0,986.7 776.9,992.2C777.8,997.7 778.5,999.2 779.0,1015.5C779.5,1031.8 779.8,1068.9 780.1,1089.8C780.4,1110.7 780.4,1129.1 780.7,1140.8C781.1,1152.5 781.6,1155.0 782.2,1159.9C782.8,1164.9 783.6,1170.5 784.3,1170.5C785.0,1170.5 785.9,1164.9 786.5,1159.9C787.1,1155.0 787.5,1146.8 788.0,1140.8C788.5,1134.8 789.0,1128.0 789.7,1123.8C790.4,1119.5 791.5,1117.1 792.4,1115.3C793.3,1113.5 794.1,1112.7 795.4,1113.2C796.7,1113.7 798.6,1116.8 800.3,1118.5C802.0,1120.2 804.2,1123.2 805.6,1123.4C807.0,1123.6 807.9,1124.0 808.8,1119.5C809.7,1115.0 810.2,1104.7 810.9,1096.2C811.6,1087.7 812.2,1075.8 813.0,1068.6C813.8,1061.3 814.7,1056.1 815.8,1052.7C816.9,1049.3 817.6,1049.7 819.4,1048.4C821.2,1047.2 823.8,1047.5 826.8,1045.2C829.8,1042.9 834.4,1037.9 837.4,1034.6C840.4,1031.3 842.7,1027.2 844.8,1025.5C846.9,1023.8 847.8,1024.1 850.1,1024.6C852.4,1025.1 856.5,1028.3 858.6,1028.7C860.7,1029.1 861.3,1028.1 862.9,1027.2C864.5,1026.3 866.1,1023.9 868.2,1023.4C870.3,1022.9 871.9,1023.2 875.6,1024.0C879.3,1024.8 886.4,1027.3 890.5,1028.3C894.6,1029.3 896.8,1028.6 900.0,1030.0C903.2,1031.4 907.3,1035.6 909.6,1036.7C911.9,1037.8 912.0,1037.7 913.8,1036.7C915.6,1035.8 917.0,1031.6 920.2,1031.0C923.4,1030.4 928.6,1032.5 932.9,1032.9C937.1,1033.3 942.5,1031.9 945.7,1033.6C948.9,1035.3 949.4,1039.4 952.0,1043.1C954.6,1046.8 958.9,1053.6 961.6,1055.9C964.3,1058.2 965.0,1057.2 968.0,1056.9C971.0,1056.6 975.9,1054.7 979.6,1054.2C983.3,1053.7 986.8,1054.0 990.0,1053.9C993.2,1053.9 996.1,1054.5 998.8,1053.9C1001.4,1053.3 1000.5,1050.9 1005.9,1050.4C1011.3,1050.0 1024.4,1049.2 1031.4,1051.2C1038.4,1053.2 1043.3,1061.2 1048.1,1062.7C1052.9,1064.2 1055.9,1060.5 1060.0,1060.0C1064.1,1059.5 1068.0,1059.2 1072.8,1059.8C1077.6,1060.4 1083.9,1063.2 1088.7,1063.8C1093.5,1064.4 1096.9,1063.8 1101.4,1063.5C1105.9,1063.2 1110.4,1061.0 1115.7,1061.9C1121.0,1062.8 1128.2,1067.8 1133.2,1069.0C1138.2,1070.2 1142.0,1068.9 1146.0,1069.0C1150.0,1069.1 1153.4,1069.8 1157.1,1069.8C1160.8,1069.8 1164.6,1068.2 1168.3,1068.7C1172.0,1069.2 1174.1,1072.3 1179.4,1073.0C1184.7,1073.7 1195.1,1072.3 1200.1,1073.0C1205.1,1073.7 1204.8,1076.4 1209.6,1077.3C1214.4,1078.2 1223.7,1077.2 1228.7,1078.6C1233.8,1080.0 1237.2,1084.5 1239.9,1085.7C1242.6,1087.0 1242.3,1086.3 1244.7,1086.1C1247.1,1085.9 1251.6,1084.4 1254.2,1084.6C1256.8,1084.8 1257.9,1085.8 1260.6,1087.0C1263.2,1088.2 1267.4,1091.2 1270.1,1092.1C1272.8,1093.0 1274.1,1092.9 1276.5,1092.4C1278.9,1091.9 1279.4,1090.3 1284.4,1089.2C1289.4,1088.1 1301.4,1085.4 1306.7,1085.7C1312.0,1086.0 1313.4,1091.3 1316.3,1091.3C1319.2,1091.2 1320.5,1086.5 1324.2,1085.4C1327.9,1084.3 1334.9,1085.6 1338.6,1084.9C1342.3,1084.2 1340.7,1082.0 1346.5,1081.3C1352.3,1080.6 1368.0,1081.4 1373.6,1081.0C1379.2,1080.6 1377.5,1080.1 1379.9,1079.1C1382.3,1078.1 1384.1,1075.5 1387.9,1074.9C1391.7,1074.3 1398.9,1075.8 1402.7,1075.4C1406.5,1075.0 1407.5,1073.1 1410.7,1072.7C1413.9,1072.3 1417.8,1072.3 1421.8,1073.3C1425.8,1074.3 1431.1,1077.4 1434.6,1078.6C1438.0,1079.8 1439.6,1079.5 1442.5,1080.5C1445.4,1081.5 1448.9,1083.9 1452.1,1084.6C1455.3,1085.3 1457.9,1085.1 1461.6,1084.6C1465.3,1084.0 1470.4,1081.4 1474.4,1081.3C1478.4,1081.2 1479.9,1083.3 1485.5,1083.8C1491.1,1084.3 1502.5,1084.9 1507.8,1084.5C1513.1,1084.1 1513.8,1081.8 1517.3,1081.3C1520.8,1080.8 1524.8,1081.0 1528.5,1081.3C1532.2,1081.6 1534.6,1083.4 1539.6,1083.3C1544.6,1083.2 1552.1,1082.0 1558.7,1080.5C1565.3,1079.0 1573.8,1075.2 1579.4,1074.6C1585.0,1074.0 1588.1,1076.9 1592.1,1076.7C1596.1,1076.5 1599.6,1074.0 1603.3,1073.3C1607.0,1072.5 1610.7,1073.4 1614.4,1072.2C1618.1,1071.0 1621.6,1067.8 1625.6,1066.3C1629.6,1064.8 1633.8,1064.3 1638.3,1063.1C1642.8,1061.9 1648.3,1060.7 1652.6,1059.0C1656.8,1057.3 1660.9,1054.2 1663.8,1053.1C1666.7,1052.0 1665.9,1052.3 1670.1,1052.6C1674.3,1052.9 1684.7,1055.3 1689.2,1055.0C1693.7,1054.7 1693.5,1051.2 1697.2,1050.7C1700.9,1050.2 1707.3,1053.6 1711.5,1052.0C1715.7,1050.4 1719.7,1043.5 1722.6,1041.2C1725.5,1038.9 1726.1,1038.3 1729.0,1038.0C1731.9,1037.7 1735.8,1038.9 1740.1,1039.1C1744.3,1039.3 1750.5,1039.2 1754.5,1039.1C1758.5,1039.0 1760.0,1038.2 1764.0,1038.3C1768.0,1038.4 1774.3,1038.9 1778.3,1039.6C1782.3,1040.2 1785.3,1041.5 1788.0,1042.2C1790.7,1042.9 1792.6,1044.5 1794.3,1044.0C1796.0,1043.5 1797.2,1043.5 1798.4,1039.3C1799.6,1035.1 1800.1,1024.4 1801.5,1018.8C1802.9,1013.2 1804.2,1009.4 1806.6,1005.6C1809.0,1001.8 1813.6,996.4 1815.8,995.9C1818.0,995.4 1819.0,996.6 1819.9,1002.5C1820.9,1008.4 1821.1,1014.4 1821.5,1031.1C1821.9,1047.8 1822.2,1084.2 1822.5,1102.6C1822.8,1121.0 1822.9,1130.2 1823.5,1141.5C1824.1,1152.8 1824.9,1162.6 1826.0,1170.1C1827.1,1177.6 1827.9,1182.6 1830.1,1186.5C1832.3,1190.4 1836.1,1192.4 1839.3,1193.6C1842.5,1194.8 1847.4,1195.1 1849.5,1193.6C1851.6,1192.1 1851.3,1189.3 1852.0,1184.4C1852.7,1179.5 1852.6,1168.9 1853.6,1164.0C1854.5,1159.1 1856.0,1156.6 1857.7,1154.8C1859.4,1153.0 1861.2,1153.5 1863.8,1153.3C1866.3,1153.1 1870.3,1152.0 1873.0,1153.8C1875.7,1155.6 1877.8,1159.4 1880.2,1164.0C1882.6,1168.6 1884.9,1176.9 1887.3,1181.3C1889.7,1185.7 1892.0,1188.9 1894.5,1190.5C1897.0,1192.1 1900.2,1192.3 1902.6,1191.0C1905.0,1189.7 1906.4,1186.2 1908.8,1182.4C1911.2,1178.6 1915.0,1171.2 1917.0,1168.1C1919.0,1165.0 1918.5,1164.2 1921.0,1164.0C1923.5,1163.8 1929.7,1166.8 1932.3,1167.0C1934.9,1167.2 1935.0,1167.5 1936.4,1165.0C1937.8,1162.5 1939.0,1155.6 1940.5,1151.7C1942.0,1147.8 1943.7,1144.4 1945.2,1141.5C1946.7,1138.6 1948.3,1135.8 1949.7,1134.3C1951.1,1132.8 1952.5,1132.1 1953.8,1132.3C1955.1,1132.5 1956.5,1133.9 1957.8,1135.4C1959.1,1136.9 1960.3,1137.8 1961.5,1141.5C1962.7,1145.2 1963.7,1151.0 1965.0,1157.8C1966.3,1164.6 1967.4,1174.6 1969.1,1182.4C1970.8,1190.2 1973.0,1199.5 1975.2,1204.9C1977.4,1210.4 1979.9,1213.0 1982.4,1215.1C1985.0,1217.2 1987.6,1217.2 1990.5,1217.5C1993.4,1217.8 1997.0,1218.0 1999.7,1217.1C2002.4,1216.2 2004.3,1214.5 2006.9,1212.0C2009.5,1209.5 2012.4,1204.2 2015.1,1201.8C2017.8,1199.4 2019.9,1198.9 2023.3,1197.7C2026.7,1196.5 2031.8,1196.3 2035.5,1194.6C2039.2,1192.9 2042.3,1190.7 2045.7,1187.5C2049.1,1184.3 2053.4,1177.7 2056.0,1175.2C2058.6,1172.7 2059.6,1171.9 2061.1,1172.6C2062.6,1173.3 2063.7,1176.9 2065.2,1179.3C2066.7,1181.7 2068.6,1185.9 2070.3,1186.9C2072.0,1187.9 2072.0,1187.4 2075.4,1185.4C2078.8,1183.5 2084.7,1178.8 2090.7,1175.2C2096.7,1171.6 2105.4,1166.1 2111.2,1164.0C2117.0,1161.9 2122.1,1161.2 2125.5,1162.5C2128.9,1163.8 2129.3,1170.4 2131.6,1172.1C2133.8,1173.8 2134.3,1174.0 2139.0,1172.8C2143.7,1171.6 2149.8,1167.5 2160.0,1165.0C2170.2,1162.5 2185.0,1160.5 2200.0,1158.0C2215.0,1155.5 2236.3,1152.8 2250.0,1150.0C2263.7,1147.2 2275.2,1144.7 2282.0,1141.5C2288.8,1138.3 2287.7,1133.6 2290.7,1131.0C2293.7,1128.4 2296.2,1126.2 2300.2,1125.7C2304.2,1125.2 2309.7,1127.3 2314.5,1128.1C2319.3,1128.9 2322.4,1130.4 2328.8,1130.5C2335.2,1130.6 2345.9,1129.0 2352.7,1128.6C2359.5,1128.2 2365.8,1127.7 2369.4,1128.1C2373.0,1128.5 2370.7,1129.8 2374.1,1131.0C2377.5,1132.2 2380.7,1134.6 2390.0,1135.5C2399.3,1136.4 2418.7,1136.4 2430.0,1136.5C2441.3,1136.6 2451.9,1136.6 2458.0,1136.0C2464.1,1135.4 2463.7,1135.3 2466.4,1133.1C2469.1,1130.9 2471.7,1125.3 2474.3,1122.6C2476.9,1119.9 2479.2,1118.6 2482.0,1117.0C2484.8,1115.4 2487.1,1114.3 2490.9,1113.1C2494.7,1111.8 2500.2,1110.7 2505.0,1109.5C2509.8,1108.3 2515.5,1107.1 2519.5,1106.0C2523.5,1104.9 2524.8,1103.7 2529.1,1102.8C2533.4,1101.9 2541.4,1101.0 2545.4,1100.4C2549.4,1099.8 2549.4,1100.2 2552.9,1099.0C2556.4,1097.8 2561.8,1094.7 2566.6,1093.5C2571.4,1092.3 2577.8,1092.9 2582.0,1091.9C2586.2,1090.9 2590.3,1088.4 2592.0,1087.7" fill="none" stroke="#ea5055" stroke-width="2"/></g>
<path d="M157.3,1032.1C159.2,1031.7 165.0,1029.2 168.7,1029.7C172.4,1030.2 176.1,1033.7 179.5,1035.2C182.9,1036.7 186.2,1037.3 189.3,1038.6C192.4,1039.9 194.9,1042.5 198.2,1043.1C201.5,1043.6 204.9,1041.9 209.0,1041.9C213.1,1041.9 219.1,1043.6 222.7,1043.1C226.3,1042.5 227.1,1039.6 230.6,1038.6C234.1,1037.6 239.5,1036.8 243.4,1037.0C247.3,1037.2 250.4,1039.5 254.2,1040.1C258.0,1040.7 262.7,1041.2 266.0,1040.7C269.3,1040.2 271.8,1037.7 273.8,1037.2C275.8,1036.8 276.2,1036.6 277.8,1038.0C279.4,1039.4 279.4,1044.6 283.6,1045.4C287.9,1046.2 297.4,1043.6 303.3,1042.9C309.2,1042.2 314.9,1042.0 319.0,1041.1C323.1,1040.2 325.1,1039.1 327.9,1037.6C330.7,1036.1 332.3,1033.1 335.7,1032.1C339.1,1031.0 344.2,1031.7 348.5,1031.3C352.8,1030.9 357.7,1029.2 361.3,1029.7C364.9,1030.2 366.7,1033.0 370.1,1034.2C373.5,1035.4 378.3,1037.0 381.9,1037.0C385.5,1037.0 388.6,1035.2 391.7,1034.2C394.8,1033.2 395.7,1031.4 400.6,1030.7C405.5,1030.0 415.8,1030.6 421.2,1030.3C426.6,1030.0 429.4,1028.3 433.0,1028.7C436.6,1029.1 439.2,1031.8 442.8,1032.7C446.4,1033.6 450.7,1034.0 454.6,1034.0C458.5,1034.0 462.1,1034.1 466.4,1032.7C470.7,1031.3 476.6,1026.8 480.2,1025.4C483.8,1024.0 485.1,1024.2 488.0,1024.4C490.9,1024.6 494.3,1026.5 497.9,1026.4C501.5,1026.3 506.3,1024.4 509.7,1023.8C513.1,1023.2 515.5,1023.6 518.5,1022.8C521.5,1022.0 523.6,1019.3 527.4,1018.9C531.2,1018.5 536.9,1020.6 541.1,1020.3C545.4,1020.0 548.0,1018.2 552.9,1017.3C557.8,1016.4 565.4,1015.1 570.6,1015.0C575.9,1014.9 579.2,1018.0 584.4,1016.9C589.6,1015.8 597.1,1009.4 602.0,1008.5C606.9,1007.6 611.0,1011.3 613.8,1011.6C616.6,1011.9 616.9,1011.3 618.7,1010.1C620.5,1008.9 622.8,1005.4 624.6,1004.6C626.4,1003.8 626.8,1004.3 629.6,1005.1C632.4,1005.9 638.4,1008.8 641.4,1009.5C644.4,1010.2 644.8,1010.2 647.4,1009.6C650.0,1009.0 652.9,1006.4 657.0,1006.0C661.1,1005.6 666.8,1006.6 671.8,1007.5C676.8,1008.4 681.7,1009.7 686.7,1011.3C691.7,1012.9 697.5,1016.0 701.6,1017.0C705.7,1018.0 708.1,1018.1 711.1,1017.6C714.1,1017.1 716.6,1014.1 719.6,1013.8C722.6,1013.5 725.3,1015.4 729.2,1015.9C733.1,1016.4 739.6,1015.1 743.0,1017.0C746.4,1018.9 746.8,1024.8 749.3,1027.2C751.8,1029.6 754.8,1030.6 757.8,1031.4C760.8,1032.2 763.7,1032.0 767.4,1031.9C771.1,1031.8 776.9,1031.5 780.1,1031.0C783.3,1030.5 784.5,1030.1 786.5,1028.9C788.5,1027.7 789.9,1025.0 791.8,1024.0C793.7,1023.0 795.5,1023.1 798.1,1023.0C800.8,1022.9 804.7,1024.3 807.7,1023.6C810.7,1022.9 813.0,1019.8 816.2,1018.7C819.4,1017.6 823.4,1018.1 826.8,1017.0C830.1,1015.9 834.0,1013.0 836.3,1012.3C838.6,1011.6 838.8,1012.2 840.6,1013.0C842.4,1013.8 844.4,1016.6 847.0,1017.2C849.6,1017.8 853.1,1017.5 856.5,1016.6C859.9,1015.7 864.5,1012.6 867.1,1011.9C869.8,1011.2 870.3,1011.6 872.4,1012.3C874.5,1013.0 874.8,1015.6 879.9,1016.2C885.0,1016.8 898.1,1016.6 903.2,1015.9C908.3,1015.2 905.3,1012.6 910.6,1011.9C915.9,1011.2 929.7,1012.4 935.0,1011.7C940.3,1011.0 940.4,1008.3 942.5,1007.7C944.6,1007.1 945.7,1007.7 947.8,1008.1C949.9,1008.5 950.2,1010.7 955.2,1010.2C960.2,1009.7 971.7,1006.0 977.5,1004.9C983.3,1003.8 986.6,1004.2 990.0,1003.8C993.4,1003.4 995.1,1003.2 998.0,1002.7C1000.9,1002.2 1003.5,1000.6 1007.5,1000.9C1011.5,1001.1 1017.0,1003.1 1021.8,1004.2C1026.6,1005.3 1032.0,1006.1 1036.2,1007.3C1040.5,1008.5 1043.1,1010.3 1047.3,1011.2C1051.5,1012.1 1056.8,1011.9 1061.6,1012.5C1066.4,1013.1 1071.4,1014.5 1075.9,1014.9C1080.4,1015.3 1085.5,1015.2 1088.7,1014.9C1091.9,1014.6 1092.6,1014.1 1095.0,1013.3C1097.4,1012.5 1099.5,1010.7 1103.0,1010.1C1106.5,1009.5 1112.2,1008.8 1115.7,1009.7C1119.2,1010.6 1120.8,1014.0 1123.7,1015.7C1126.6,1017.4 1130.8,1019.4 1133.2,1020.0C1135.6,1020.6 1136.1,1019.9 1138.0,1019.2C1139.9,1018.5 1141.0,1016.6 1144.4,1016.0C1147.9,1015.4 1155.0,1016.2 1158.7,1015.7C1162.4,1015.2 1163.8,1012.8 1166.7,1013.0C1169.6,1013.2 1170.6,1016.2 1176.2,1016.8C1181.8,1017.4 1194.0,1016.7 1200.1,1016.5C1206.2,1016.3 1208.0,1015.5 1212.8,1015.7C1217.6,1015.9 1224.2,1016.1 1228.7,1017.6C1233.2,1019.1 1235.7,1023.3 1239.9,1024.5C1244.2,1025.7 1250.8,1023.6 1254.2,1024.8C1257.7,1026.0 1257.8,1028.5 1260.6,1031.6C1263.4,1034.7 1267.2,1041.8 1270.9,1043.6C1274.6,1045.4 1278.8,1042.3 1282.9,1042.4C1287.0,1042.5 1292.0,1045.0 1295.6,1044.4C1299.2,1043.8 1302.2,1039.6 1304.3,1038.8C1306.4,1038.0 1306.6,1038.5 1308.3,1039.6C1310.0,1040.7 1313.1,1044.3 1314.7,1045.2C1316.3,1046.1 1316.3,1045.8 1317.9,1044.8C1319.5,1043.8 1322.4,1040.1 1324.2,1039.1C1326.0,1038.1 1326.6,1038.4 1329.0,1038.8C1331.4,1039.2 1335.4,1041.6 1338.6,1041.5C1341.8,1041.4 1345.7,1038.5 1348.1,1038.0C1350.5,1037.5 1349.5,1036.8 1352.9,1038.8C1356.4,1040.8 1364.6,1047.0 1368.8,1049.9C1373.0,1052.8 1375.1,1053.5 1378.3,1056.3C1381.5,1059.1 1385.0,1064.3 1387.9,1066.6C1390.8,1068.9 1394.0,1069.5 1395.9,1070.1C1397.8,1070.7 1398.1,1070.5 1399.5,1070.3C1400.9,1070.1 1402.4,1070.4 1404.3,1069.0C1406.2,1067.6 1408.3,1063.6 1410.7,1061.9C1413.1,1060.2 1416.2,1059.1 1418.6,1058.7C1421.0,1058.3 1422.6,1058.8 1425.0,1059.5C1427.4,1060.2 1430.1,1062.7 1433.0,1062.7C1435.9,1062.7 1438.8,1061.2 1442.5,1059.5C1446.2,1057.8 1451.6,1053.8 1455.3,1052.3C1459.0,1050.8 1461.6,1051.5 1464.8,1050.7C1468.0,1049.9 1472.0,1047.7 1474.4,1047.2C1476.8,1046.7 1475.9,1046.4 1479.1,1047.5C1482.3,1048.6 1489.0,1052.4 1493.5,1053.9C1498.0,1055.4 1502.2,1056.3 1506.2,1056.3C1510.2,1056.3 1513.3,1054.4 1517.3,1053.9C1521.3,1053.4 1526.6,1052.1 1530.1,1053.4C1533.5,1054.7 1536.2,1060.5 1538.0,1061.9C1539.8,1063.3 1539.6,1062.9 1541.2,1061.9C1542.8,1060.9 1544.1,1057.0 1547.6,1056.0C1551.0,1055.0 1557.7,1056.2 1561.9,1056.0C1566.1,1055.8 1570.1,1054.3 1573.0,1055.0C1575.9,1055.7 1576.2,1059.2 1579.4,1060.0C1582.6,1060.8 1586.5,1059.4 1592.1,1059.5C1597.7,1059.6 1607.2,1060.5 1612.8,1060.6C1618.4,1060.7 1622.1,1059.3 1625.6,1060.0C1629.0,1060.7 1631.4,1064.2 1633.5,1065.0C1635.6,1065.8 1636.2,1065.6 1638.3,1065.0C1640.4,1064.4 1643.0,1061.9 1646.2,1061.5C1649.4,1061.1 1653.4,1062.7 1657.4,1062.7C1661.4,1062.7 1665.1,1061.5 1670.1,1061.4C1675.1,1061.3 1683.1,1061.2 1687.6,1062.2C1692.1,1063.2 1694.8,1066.6 1697.2,1067.4C1699.6,1068.2 1699.6,1068.0 1702.0,1067.0C1704.4,1066.0 1707.3,1063.2 1711.5,1061.5C1715.7,1059.8 1724.0,1057.6 1727.4,1056.8C1730.9,1056.0 1729.8,1056.3 1732.2,1056.8C1734.6,1057.2 1737.2,1059.9 1741.7,1059.5C1746.2,1059.1 1753.7,1055.3 1759.3,1054.2C1764.9,1053.1 1771.0,1052.5 1775.2,1053.1C1779.4,1053.7 1782.2,1056.8 1784.7,1057.9C1787.2,1059.0 1788.1,1058.4 1790.2,1059.7C1792.3,1061.0 1795.0,1062.5 1797.4,1065.9C1799.8,1069.3 1801.6,1076.3 1804.5,1080.2C1807.4,1084.1 1812.4,1086.0 1814.8,1089.4C1817.2,1092.8 1817.6,1095.7 1818.8,1100.6C1820.0,1105.5 1820.7,1114.9 1821.9,1119.0C1823.1,1123.1 1823.8,1124.7 1826.0,1125.1C1828.2,1125.5 1832.7,1121.9 1835.2,1121.5C1837.8,1121.1 1839.2,1121.9 1841.3,1122.5C1843.3,1123.1 1844.9,1124.5 1847.5,1125.1C1850.1,1125.7 1854.3,1125.3 1856.7,1126.2C1859.1,1127.1 1859.9,1128.2 1861.8,1130.2C1863.7,1132.2 1865.7,1136.4 1867.9,1138.4C1870.1,1140.4 1872.9,1141.6 1875.1,1142.1C1877.3,1142.6 1879.3,1142.8 1881.2,1141.5C1883.1,1140.2 1884.6,1135.7 1886.3,1134.3C1888.0,1132.9 1889.0,1132.6 1891.4,1132.9C1893.8,1133.2 1897.9,1134.1 1900.6,1136.4C1903.3,1138.7 1905.9,1144.6 1907.8,1146.6C1909.7,1148.6 1909.9,1148.9 1911.8,1148.2C1913.7,1147.5 1917.1,1143.5 1919.0,1142.5C1920.9,1141.5 1921.4,1140.6 1923.1,1142.5C1924.8,1144.4 1927.2,1151.8 1929.2,1153.8C1931.2,1155.8 1933.0,1154.8 1935.4,1154.8C1937.8,1154.8 1941.5,1153.5 1943.5,1153.8C1945.5,1154.1 1946.1,1155.2 1947.6,1156.8C1949.1,1158.4 1951.2,1162.6 1952.7,1163.6C1954.2,1164.5 1955.3,1164.1 1956.8,1162.5C1958.3,1160.9 1960.4,1155.8 1961.9,1154.2C1963.4,1152.6 1963.6,1152.7 1966.0,1153.1C1968.4,1153.5 1972.8,1155.8 1976.2,1156.8C1979.6,1157.8 1983.6,1157.7 1986.5,1158.9C1989.4,1160.1 1991.0,1163.0 1993.6,1164.0C1996.1,1165.0 1999.2,1165.1 2001.8,1164.6C2004.3,1164.1 2006.7,1162.7 2008.9,1160.9C2011.1,1159.1 2013.2,1155.1 2015.1,1153.8C2017.0,1152.5 2018.2,1152.7 2020.2,1153.1C2022.2,1153.5 2025.1,1155.8 2027.3,1156.2C2029.5,1156.6 2030.1,1156.6 2033.5,1155.4C2036.9,1154.2 2044.4,1149.9 2047.8,1149.0C2051.2,1148.1 2051.2,1148.9 2053.9,1150.1C2056.6,1151.3 2060.3,1154.4 2064.1,1156.2C2067.8,1158.0 2073.2,1160.0 2076.4,1160.9C2079.7,1161.8 2081.2,1162.3 2083.6,1161.5C2086.0,1160.7 2088.7,1156.7 2090.7,1155.8C2092.7,1154.9 2093.6,1155.6 2095.8,1156.2C2098.0,1156.8 2100.8,1159.7 2104.0,1159.5C2107.2,1159.3 2112.1,1156.3 2115.2,1154.8C2118.3,1153.3 2120.3,1151.2 2122.4,1150.7C2124.5,1150.2 2125.6,1150.5 2127.5,1151.7C2129.4,1152.9 2131.7,1156.2 2133.6,1157.8C2135.5,1159.4 2136.3,1161.5 2139.0,1161.5C2141.7,1161.5 2144.8,1159.9 2150.0,1158.0C2155.2,1156.1 2162.5,1153.0 2170.0,1150.0C2177.5,1147.0 2189.2,1142.6 2195.0,1140.0C2200.8,1137.4 2201.4,1135.8 2205.0,1134.5C2208.6,1133.2 2210.9,1133.0 2216.8,1132.2C2222.7,1131.4 2235.0,1131.2 2240.6,1129.8C2246.2,1128.4 2246.6,1124.2 2250.2,1123.8C2253.8,1123.4 2257.7,1126.4 2262.1,1127.4C2266.5,1128.4 2272.8,1129.1 2276.4,1129.8C2280.0,1130.5 2281.2,1132.5 2283.6,1131.7C2286.0,1130.9 2288.5,1126.3 2290.7,1125.0C2292.9,1123.7 2293.5,1122.8 2296.7,1123.8C2299.9,1124.8 2305.9,1129.1 2309.8,1131.0C2313.7,1132.9 2314.1,1134.2 2320.0,1135.0C2325.9,1135.8 2337.5,1136.2 2345.0,1136.0C2352.5,1135.8 2360.2,1134.8 2365.0,1134.0C2369.8,1133.2 2369.0,1132.2 2374.1,1131.0C2379.2,1129.8 2388.4,1127.8 2395.6,1126.7C2402.8,1125.6 2410.7,1124.9 2417.0,1124.6C2423.3,1124.3 2427.7,1124.7 2433.7,1125.0C2439.7,1125.3 2448.6,1125.2 2452.8,1126.2C2457.0,1127.2 2456.6,1129.4 2458.8,1131.0C2461.0,1132.6 2459.1,1134.8 2466.0,1136.0C2472.9,1137.2 2488.5,1138.0 2500.0,1138.0C2511.5,1138.0 2526.6,1136.2 2535.0,1136.0C2543.4,1135.8 2546.3,1136.1 2550.5,1136.9C2554.7,1137.7 2556.0,1140.6 2560.0,1141.0C2564.0,1141.4 2569.2,1139.2 2574.4,1139.3C2579.7,1139.4 2588.7,1141.3 2591.5,1141.7" fill="none" stroke="#ecc75e" stroke-width="1.8" stroke-linejoin="round"/>
<line x1="151.8" x2="2592" y1="1092" y2="1092" stroke="#f0f0f0" stroke-width="2" stroke-dasharray="8 4"/>
<line x1="2592" x2="2592" y1="875" y2="1282" stroke="#b9bbc0" stroke-width="2" stroke-dasharray="8 6"/>
<circle cx="2592" cy="1087.3" r="8.6" fill="#ffffff" stroke="#54ab96" stroke-width="3.6"/>
<circle cx="2592" cy="1142.3" r="8.6" fill="#ffffff" stroke="#e5ba57" stroke-width="3.6"/>
</svg>
<div class="t" id="t0" style="top:55.39px;font-size:26px;color:#e6eaf0;left:47.40px;transform-origin:0 0;transform:scaleX(0.9892);">Volume</div>
<div class="t" id="t1" style="top:55.39px;font-size:26px;color:#4fae95;right:2260.20px;transform-origin:100% 0;transform:scaleX(0.9674);">+36.08%</div>
<div class="t" id="t2" style="top:55.39px;font-size:26px;color:#e6eaf0;right:2110.60px;transform-origin:100% 0;transform:scaleX(0.9392);">$6.55B</div>
<div class="t" id="t3" style="top:159.39px;font-size:26px;color:#e6eaf0;left:47.40px;transform-origin:0 0;transform:scaleX(1.0086);">Open Interest</div>
<div class="t" id="t4" style="top:159.39px;font-size:26px;color:#e5494f;right:2260.20px;transform-origin:100% 0;transform:scaleX(0.9872);">-14.41%</div>
<div class="t" id="t5" style="top:159.39px;font-size:26px;color:#e6eaf0;right:2110.60px;transform-origin:100% 0;transform:scaleX(0.9392);">$1.21B</div>
<div class="t" id="t6" style="top:263.39px;font-size:26px;color:#e6eaf0;left:47.40px;transform-origin:0 0;transform:scaleX(0.9942);">Options Volume</div>
<div class="t" id="t7" style="top:367.39px;font-size:26px;color:#e6eaf0;left:47.40px;transform-origin:0 0;transform:scaleX(1.0009);">Options Open Interest</div>
<div class="t" id="t8" style="top:55.19px;font-size:26px;color:#e6eaf0;left:732.80px;transform-origin:0 0;transform:scaleX(0.9839);">Long/Short (24h)</div>
<div class="t" id="t9" style="top:55.19px;font-size:26px;color:#4fae95;right:1425.40px;transform-origin:100% 0;transform:scaleX(0.9870);">0.9354</div>
<div class="t" id="t10" style="top:138.99px;font-size:26px;color:#e6eaf0;left:732.80px;transform-origin:0 0;transform:scaleX(0.9617);">Binance SUI/USDT</div>
<div class="t" id="t11" style="top:181.08px;font-size:24px;color:#9ea4ae;left:732.80px;transform-origin:0 0;transform:scaleX(1.0026);">Long/Short Ratio(Accounts)</div>
<div class="t" id="t12" style="top:159.49px;font-size:26px;color:#4fae95;right:1425.40px;transform-origin:100% 0;transform:scaleX(0.9908);">2.7202</div>
<div class="t" id="t13" style="top:242.99px;font-size:26px;color:#e6eaf0;left:732.80px;transform-origin:0 0;transform:scaleX(0.9120);">OKX SUI</div>
<div class="t" id="t14" style="top:285.08px;font-size:24px;color:#9ea4ae;left:732.80px;transform-origin:0 0;transform:scaleX(1.0026);">Long/Short Ratio(Accounts)</div>
<div class="t" id="t15" style="top:263.49px;font-size:26px;color:#4fae95;right:1425.40px;transform-origin:100% 0;transform:scaleX(0.9524);">2.38</div>
<div class="t" id="t16" style="top:346.99px;font-size:26px;color:#e6eaf0;left:732.80px;transform-origin:0 0;transform:scaleX(0.9617);">Binance SUI/USDT</div>
<div class="t" id="t17" style="top:389.08px;font-size:24px;color:#9ea4ae;left:732.80px;transform-origin:0 0;transform:scaleX(1.0023);">Top Trader Long/Short (Accounts)</div>
<div class="t" id="t18" style="top:367.49px;font-size:26px;color:#4fae95;right:1425.40px;transform-origin:100% 0;transform:scaleX(0.9807);">2.4083</div>
<div class="t" id="t19" style="top:450.99px;font-size:26px;color:#e6eaf0;left:732.80px;transform-origin:0 0;transform:scaleX(0.9617);">Binance SUI/USDT</div>
<div class="t" id="t20" style="top:493.08px;font-size:24px;color:#9ea4ae;left:732.80px;transform-origin:0 0;transform:scaleX(1.0009);">Top Trader Long/Short (Positions)</div>
<div class="t" id="t21" style="top:471.49px;font-size:26px;color:#4fae95;right:1425.40px;transform-origin:100% 0;transform:scaleX(0.9619);">1.8027</div>
<div class="t" id="t22" style="top:44.99px;font-size:26px;color:#afb4bd;left:1398.00px;transform-origin:0 0;transform:scaleX(0.9530);">1h Rekt</div>
<div class="t" id="t23" style="top:44.99px;font-size:26px;color:#e6eaf0;right:948.20px;transform-origin:100% 0;transform:scaleX(0.9432);">$143.49K</div>
<div class="t" id="t24" style="top:118.99px;font-size:26px;color:#afb4bd;left:1398.00px;transform-origin:0 0;transform:scaleX(0.9335);">Long</div>
<div class="t" id="t25" style="top:118.99px;font-size:26px;color:#4fae95;right:948.20px;transform-origin:100% 0;transform:scaleX(0.9432);">$143.38K</div>
<div class="t" id="t26" style="top:192.99px;font-size:26px;color:#afb4bd;left:1398.00px;transform-origin:0 0;transform:scaleX(0.9734);">Short</div>
<div class="t" id="t27" style="top:192.99px;font-size:26px;color:#e5494f;right:948.20px;transform-origin:100% 0;transform:scaleX(0.9646);">$114.92</div>
<div class="t" id="t28" style="top:44.99px;font-size:26px;color:#afb4bd;left:1854.00px;transform-origin:0 0;transform:scaleX(0.9642);">4h Rekt</div>
<div class="t" id="t29" style="top:44.99px;font-size:26px;color:#e6eaf0;right:491.20px;transform-origin:100% 0;transform:scaleX(0.9485);">$472.80K</div>
<div class="t" id="t30" style="top:118.99px;font-size:26px;color:#afb4bd;left:1854.00px;transform-origin:0 0;transform:scaleX(0.9335);">Long</div>
<div class="t" id="t31" style="top:118.99px;font-size:26px;color:#4fae95;right:491.20px;transform-origin:100% 0;transform:scaleX(0.9485);">$290.37K</div>
<div class="t" id="t32" style="top:192.99px;font-size:26px;color:#afb4bd;left:1854.00px;transform-origin:0 0;transform:scaleX(0.9734);">Short</div>
<div class="t" id="t33" style="top:192.99px;font-size:26px;color:#e5494f;right:491.20px;transform-origin:100% 0;transform:scaleX(0.9485);">$182.43K</div>
<div class="t" id="t34" style="top:330.99px;font-size:26px;color:#afb4bd;left:1398.00px;transform-origin:0 0;transform:scaleX(0.9483);">12h Rekt</div>
<div class="t" id="t35" style="top:330.99px;font-size:26px;color:#e6eaf0;right:948.20px;transform-origin:100% 0;transform:scaleX(0.9721);">$11.32M</div>
<div class="t" id="t36" style="top:404.99px;font-size:26px;color:#afb4bd;left:1398.00px;transform-origin:0 0;transform:scaleX(0.9335);">Long</div>
<div class="t" id="t37" style="top:404.99px;font-size:26px;color:#4fae95;right:948.20px;transform-origin:100% 0;transform:scaleX(0.9537);">$10.93M</div>
<div class="t" id="t38" style="top:478.99px;font-size:26px;color:#afb4bd;left:1398.00px;transform-origin:0 0;transform:scaleX(0.9734);">Short</div>
<div class="t" id="t39" style="top:478.99px;font-size:26px;color:#e5494f;right:948.20px;transform-origin:100% 0;transform:scaleX(0.9521);">$390.74K</div>
<div class="t" id="t40" style="top:330.99px;font-size:26px;color:#afb4bd;left:1854.00px;transform-origin:0 0;transform:scaleX(0.9579);">24h Rekt</div>
<div class="t" id="t41" style="top:330.99px;font-size:26px;color:#e6eaf0;right:491.20px;transform-origin:100% 0;transform:scaleX(0.9537);">$13.39M</div>
<div class="t" id="t42" style="top:404.99px;font-size:26px;color:#afb4bd;left:1854.00px;transform-origin:0 0;transform:scaleX(0.9335);">Long</div>
<div class="t" id="t43" style="top:404.99px;font-size:26px;color:#4fae95;right:491.20px;transform-origin:100% 0;transform:scaleX(0.9537);">$12.63M</div>
<div class="t" id="t44" style="top:478.99px;font-size:26px;color:#afb4bd;left:1854.00px;transform-origin:0 0;transform:scaleX(0.9734);">Short</div>
<div class="t" id="t45" style="top:478.99px;font-size:26px;color:#e5494f;right:491.20px;transform-origin:100% 0;transform:scaleX(0.9485);">$766.79K</div>
<div class="t" id="t46" style="top:54.69px;font-size:26px;color:#e6eaf0;left:2330.80px;transform-origin:0 0;transform:scaleX(0.9837);">Trending</div>
<div class="t" id="t47" style="top:158.45px;font-size:26.4px;color:#e6eaf0;font-weight:700;-webkit-text-stroke:0.3px;left:2389.50px;transform-origin:0 0;transform:scaleX(0.9126);">Binance</div>
<div class="t" id="t48" style="top:262.45px;font-size:26.4px;color:#e6eaf0;font-weight:700;-webkit-text-stroke:0.3px;left:2389.50px;transform-origin:0 0;transform:scaleX(0.8846);">OKX</div>
<div class="t" id="t49" style="top:366.45px;font-size:26.4px;color:#e6eaf0;font-weight:700;-webkit-text-stroke:0.3px;left:2389.50px;transform-origin:0 0;transform:scaleX(0.9184);">Bybit</div>
<div class="t" id="t50" style="top:470.45px;font-size:26.4px;color:#e6eaf0;font-weight:700;-webkit-text-stroke:0.3px;left:2389.50px;transform-origin:0 0;transform:scaleX(0.9372);">Bitfinex</div>
<div class="t" id="t51" style="top:615.11px;font-size:29.4px;color:#ffffff;font-weight:700;-webkit-text-stroke:0.3px;left:25.60px;transform-origin:0 0;transform:scaleX(0.9169);">Weighted Funding Rate</div>
<div class="t" id="t52" style="top:615.11px;font-size:29.4px;color:#c9d1de;font-weight:700;-webkit-text-stroke:0.3px;left:411.30px;transform-origin:0 0;transform:scaleX(0.9432);">Open Interest</div>
<div class="t" id="t53" style="top:615.11px;font-size:29.4px;color:#c9d1de;font-weight:700;-webkit-text-stroke:0.3px;left:675.20px;transform-origin:0 0;transform:scaleX(0.9309);">Volume</div>
<div class="t" id="t54" style="top:615.11px;font-size:29.4px;color:#c9d1de;font-weight:700;-webkit-text-stroke:0.3px;left:858.00px;transform-origin:0 0;transform:scaleX(0.9093);">Liquidation</div>
<div class="t" id="t55" style="top:706.54px;font-size:42.6px;color:#f2f4f8;font-weight:700;-webkit-text-stroke:1.0px;left:-11.00px;transform-origin:0 0;transform:scaleX(0.9186);">SUI OI-Weighted Funding Rate</div>
<div class="t" id="t56" style="top:715.50px;font-size:28px;color:#c9d1de;left:1775.40px;transform-origin:0 0;transform:scaleX(1.0034);">OI-Weighted</div>
<div class="t" id="t57" style="top:715.50px;font-size:28px;color:#c9d1de;left:2002.60px;transform-origin:0 0;transform:scaleX(1.0104);">Volume-Weighted</div>
<div class="t" id="t58" style="top:715.60px;font-size:28px;color:#c9d1de;left:2325.80px;transform-origin:0 0;transform:scaleX(0.9574);">SUI</div>
<div class="t" id="t59" style="top:715.60px;font-size:28px;color:#c9d1de;left:2550.40px;transform-origin:0 0;transform:scaleX(1.0055);">5 minute</div>
<div class="t" id="t60" style="top:807.36px;font-size:23.2px;color:#ffffff;left:1222.40px;transform-origin:0 0;transform:scaleX(1.0047);">SUI Price</div>
<div class="t" id="t61" style="top:807.36px;font-size:23.2px;color:#ffffff;left:1378.60px;transform-origin:0 0;transform:scaleX(1.0358);">OI-Weighted</div>
<div class="t" id="t62" style="top:861.78px;font-size:24px;color:#a9abb0;right:2579.40px;transform-origin:100% 0;transform:scaleX(0.9266);">0.0120%</div>
<div class="t" id="t63" style="top:928.31px;font-size:24px;color:#a9abb0;right:2579.40px;transform-origin:100% 0;transform:scaleX(0.9266);">0.0090%</div>
<div class="t" id="t64" style="top:994.84px;font-size:24px;color:#a9abb0;right:2579.40px;transform-origin:100% 0;transform:scaleX(0.9266);">0.0060%</div>
<div class="t" id="t65" style="top:1061.37px;font-size:24px;color:#a9abb0;right:2579.40px;transform-origin:100% 0;transform:scaleX(0.9266);">0.0030%</div>
<div class="t" id="t66" style="top:1127.90px;font-size:24px;color:#a9abb0;right:2579.40px;transform-origin:100% 0;transform:scaleX(0.8706);">0%</div>
<div class="t" id="t67" style="top:1194.43px;font-size:24px;color:#a9abb0;right:2579.40px;transform-origin:100% 0;transform:scaleX(0.9411);">-0.0030%</div>
<div class="t" id="t68" style="top:1260.96px;font-size:24px;color:#a9abb0;right:2579.40px;transform-origin:100% 0;transform:scaleX(0.9411);">-0.0060%</div>
<div class="t" id="t69" style="top:1288.98px;font-size:24px;color:#a9abb0;left:132.35px;transform-origin:0 0;transform:scaleX(0.9311);">12, 16:50</div>
<div class="t" id="t70" style="top:1288.98px;font-size:24px;color:#a9abb0;left:259.87px;transform-origin:0 0;transform:scaleX(0.9311);">12, 17:50</div>
<div class="t" id="t71" style="top:1288.98px;font-size:24px;color:#a9abb0;left:387.39px;transform-origin:0 0;transform:scaleX(0.9311);">12, 18:50</div>
<div class="t" id="t72" style="top:1288.98px;font-size:24px;color:#a9abb0;left:514.91px;transform-origin:0 0;transform:scaleX(0.9311);">12, 19:50</div>
<div class="t" id="t73" style="top:1288.98px;font-size:24px;color:#a9abb0;left:642.43px;transform-origin:0 0;transform:scaleX(0.9311);">12, 20:50</div>
<div class="t" id="t74" style="top:1288.98px;font-size:24px;color:#a9abb0;left:769.95px;transform-origin:0 0;transform:scaleX(0.9311);">12, 21:50</div>
<div class="t" id="t75" style="top:1288.98px;font-size:24px;color:#a9abb0;left:897.47px;transform-origin:0 0;transform:scaleX(0.9311);">12, 22:50</div>
<div class="t" id="t76" style="top:1288.98px;font-size:24px;color:#a9abb0;left:1024.99px;transform-origin:0 0;transform:scaleX(0.9311);">12, 23:50</div>
<div class="t" id="t77" style="top:1288.98px;font-size:24px;color:#a9abb0;left:1152.51px;transform-origin:0 0;transform:scaleX(0.9311);">13, 00:50</div>
<div class="t" id="t78" style="top:1288.98px;font-size:24px;color:#a9abb0;left:1280.03px;transform-origin:0 0;transform:scaleX(0.9311);">13, 01:50</div>
<div class="t" id="t79" style="top:1288.98px;font-size:24px;color:#a9abb0;left:1407.55px;transform-origin:0 0;transform:scaleX(0.9311);">13, 02:50</div>
<div class="t" id="t80" style="top:1288.98px;font-size:24px;color:#a9abb0;left:1535.07px;transform-origin:0 0;transform:scaleX(0.9311);">13, 03:50</div>
<div class="t" id="t81" style="top:1288.98px;font-size:24px;color:#a9abb0;left:1662.59px;transform-origin:0 0;transform:scaleX(0.9311);">13, 04:50</div>
<div class="t" id="t82" style="top:1288.98px;font-size:24px;color:#a9abb0;left:1790.11px;transform-origin:0 0;transform:scaleX(0.9311);">13, 05:50</div>
<div class="t" id="t83" style="top:1288.98px;font-size:24px;color:#a9abb0;left:1917.63px;transform-origin:0 0;transform:scaleX(0.9311);">13, 06:50</div>
<div class="t" id="t84" style="top:1288.98px;font-size:24px;color:#a9abb0;left:2045.15px;transform-origin:0 0;transform:scaleX(0.9311);">13, 07:50</div>
<div class="t" id="t85" style="top:862.68px;font-size:24px;color:#a9abb0;left:2614.20px;transform-origin:0 0;transform:scaleX(0.9490);">$3.70</div>
<div class="t" id="t86" style="top:900.23px;font-size:24px;color:#a9abb0;left:2614.20px;transform-origin:0 0;transform:scaleX(0.9490);">$3.60</div>
<div class="t" id="t87" style="top:975.33px;font-size:24px;color:#a9abb0;left:2614.20px;transform-origin:0 0;transform:scaleX(0.9490);">$3.40</div>
<div class="t" id="t88" style="top:1050.42px;font-size:24px;color:#a9abb0;left:2614.20px;transform-origin:0 0;transform:scaleX(0.9490);">$3.20</div>
<div class="t" id="t89" style="top:1125.51px;font-size:24px;color:#a9abb0;left:2614.20px;transform-origin:0 0;transform:scaleX(0.9490);">$3.00</div>
<div class="t" id="t90" style="top:1200.61px;font-size:24px;color:#a9abb0;left:2614.20px;transform-origin:0 0;transform:scaleX(0.9490);">$2.80</div>
<div class="t" id="t91" style="top:1260.68px;font-size:24px;color:#a9abb0;left:2614.20px;transform-origin:0 0;transform:scaleX(0.9490);">$2.64</div>
<div class="abs" style="left:73px;top:1069px;width:72.5px;height:44px;background:#000;border-radius:7px"></div>
<div class="abs" style="left:2603px;top:1069px;width:73px;height:44px;background:#000;border-radius:6px"></div>
<div class="abs" style="left:2481px;top:1281px;width:222px;height:41px;background:#000;border-radius:7px"></div>
<div class="t" id="o0" style="top:1076.87px;font-size:25.2px;color:#ffffff;-webkit-text-stroke:0.9px;left:88.10px;transform-origin:0 0;transform:scaleX(0.8709);">0.00</div>
<div class="t" id="o1" style="top:1076.97px;font-size:25.2px;color:#ffffff;-webkit-text-stroke:0.9px;left:2618.00px;transform-origin:0 0;transform:scaleX(0.8607);">3.13</div>
<div class="t" id="o2" style="top:1287.97px;font-size:25.2px;color:#ffffff;-webkit-text-stroke:0.9px;left:2493.80px;transform-origin:0 0;transform:scaleX(0.9186);">13 Jun 2025, 11:45</div>
<div class="abs" style="left:2139px;top:1133px;width:411px;height:214px;background:#05060b;border-radius:17px"></div>
<div class="abs" style="left:2169.3px;top:1237.8px;width:20px;height:20px;box-sizing:border-box;border-radius:50%;background:#e4b84f;border:3.4px solid #dde2ea"></div>
<div class="abs" style="left:2169.3px;top:1281.9px;width:20px;height:20px;box-sizing:border-box;border-radius:50%;background:#5bae98;border:3.4px solid #dde2ea"></div>
<div class="t" id="p0" style="top:1169.94px;font-size:29.6px;color:#ffffff;-webkit-text-stroke:0.95px;left:2171.50px;transform-origin:0 0;transform:scaleX(0.9752);">13 Jun 2025, 11:45</div>
<div class="t" id="p1" style="top:1233.24px;font-size:29.6px;color:#c9d1de;left:2197.70px;transform-origin:0 0;transform:scaleX(0.9881);">SUI Price</div>
<div class="t" id="p2" style="top:1277.54px;font-size:29.6px;color:#c9d1de;left:2197.70px;transform-origin:0 0;transform:scaleX(1.0194);">OI-Weighted</div>
<div class="t" id="p3" style="top:1233.24px;font-size:29.6px;color:#ffffff;-webkit-text-stroke:0.95px;right:194.80px;transform-origin:100% 0;transform:scaleX(0.9559);">$2.99</div>
<div class="t" id="p4" style="top:1277.54px;font-size:29.6px;color:#ffffff;-webkit-text-stroke:0.95px;right:194.80px;transform-origin:100% 0;transform:scaleX(0.9389);">0.0024%</div>
</div></body></html>
